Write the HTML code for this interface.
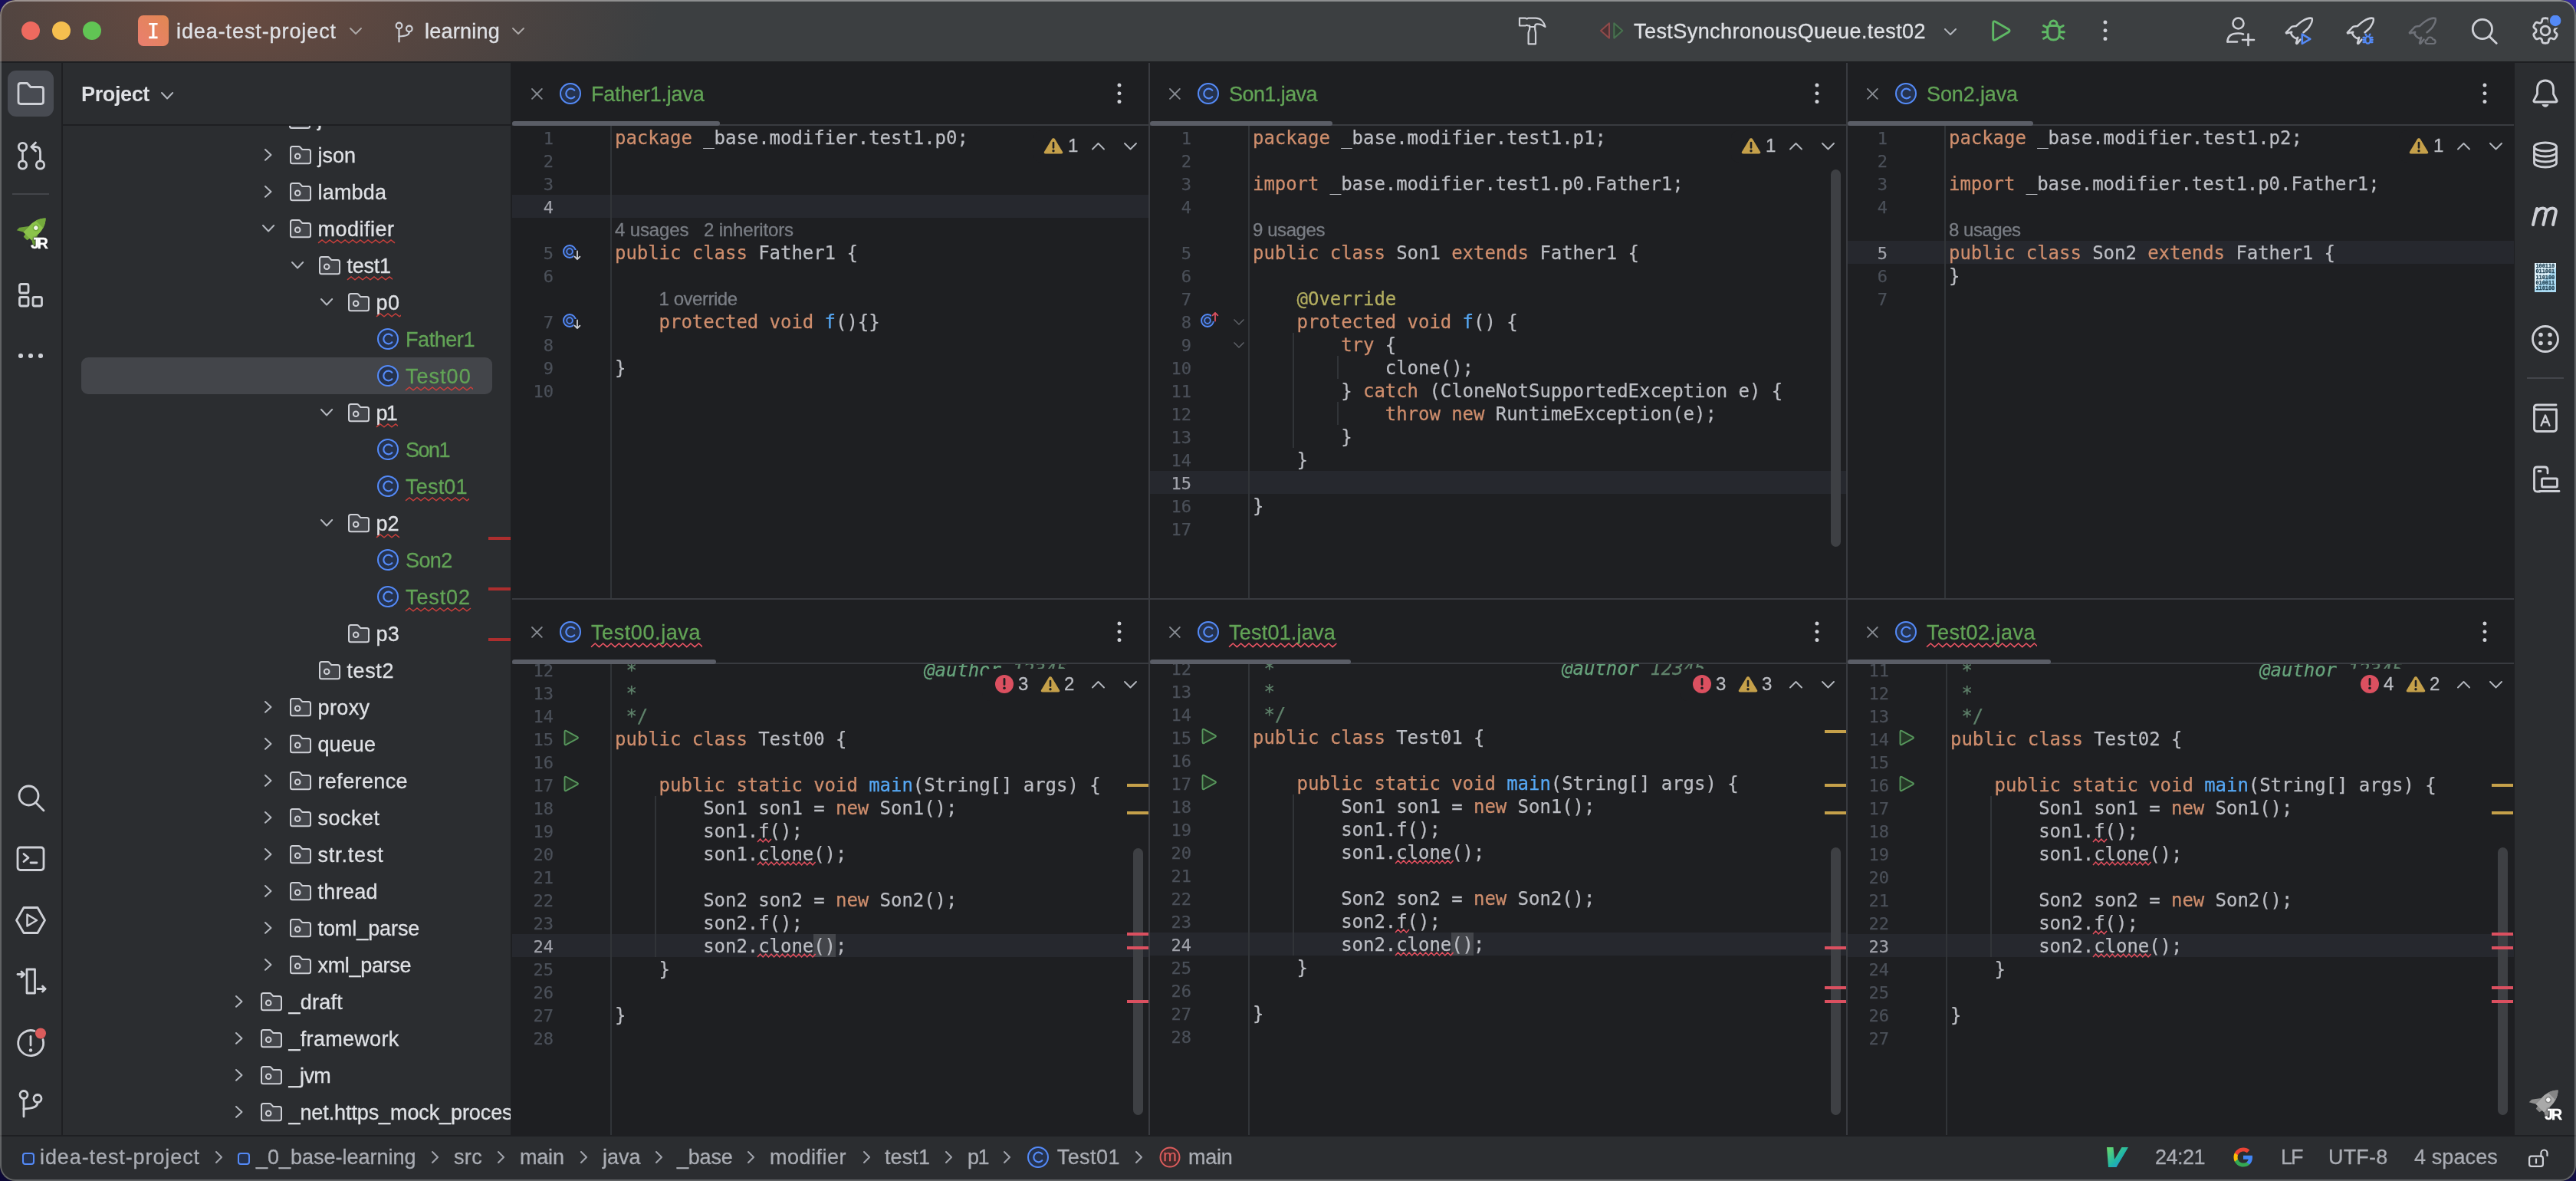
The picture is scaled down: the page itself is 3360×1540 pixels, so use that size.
<!DOCTYPE html>
<html lang="en"><head><meta charset="utf-8"><title>idea-test-project</title><style>
html,body{margin:0;padding:0;}
body{width:3360px;height:1540px;overflow:hidden;background:#000;position:relative;}
#desk{position:absolute;left:0;top:0;width:3360px;height:1540px;background:linear-gradient(180deg,rgba(0,0,0,0) 0%,rgba(8,6,40,0.75) 100%),linear-gradient(90deg,#190f5c 0%,#1b1250 40%,#3228a0 100%);}
#win{will-change:transform;position:absolute;left:0;top:0;width:3360px;height:1540px;border-radius:20px;overflow:hidden;background:#2b2d30;}
#win div,#win svg,#win span{position:absolute;}
#edge{left:0;top:0;width:3360px;height:1540px;border-radius:20px;box-shadow:inset 0 0 0 2px rgba(255,255,255,0.26),inset 0 2px 0 0 rgba(255,255,255,0.22);pointer-events:none;}
.t{white-space:pre;}
.f-sans{font-family:"Liberation Sans","DejaVu Sans",sans-serif;-webkit-text-stroke:0.3px;}
.f-mono{font-family:"DejaVu Sans Mono","Liberation Mono",monospace;-webkit-text-stroke:0.25px;}
</style></head>
<body><div id="desk"></div><div id="win">
<div style="left:0px;top:0px;width:3360px;height:80px;background:#3c3f41;background:radial-gradient(ellipse 560px 300px at 300px 0px,#6a4b40 0%,rgba(106,75,64,0.55) 45%,rgba(106,75,64,0) 100%),#3c3f41;"></div>
<div style="left:0px;top:80px;width:3360px;height:2px;background:#1e1f22;"></div>
<div style="left:80px;top:82px;width:2px;height:1398px;background:#1e1f22;"></div>
<div style="left:82px;top:162px;width:584px;height:2px;background:#1e1f22;"></div>
<div style="left:666px;top:82px;width:2614px;height:1398px;background:#1e1f22;"></div>
<div style="left:0px;top:1482px;width:3360px;height:58px;background:#2b2d30;"></div>
<div style="left:0px;top:1480px;width:3360px;height:2px;background:#1e1f22;"></div>
<div style="left:28px;top:28px;width:24px;height:24px;background:#ee6a5f;border-radius:50%;"></div>
<div style="left:68px;top:28px;width:24px;height:24px;background:#f5bf4f;border-radius:50%;"></div>
<div style="left:108px;top:28px;width:24px;height:24px;background:#61c554;border-radius:50%;"></div>
<div style="left:180px;top:20px;width:40px;height:40px;background:#e8805c;border-radius:7px;background:linear-gradient(45deg,#ea7e70 0%,#e18852 100%);"></div>
<span class="t f-mono" style="top:25px;font-size:27px;line-height:31px;color:#ffffff;left:200.00px;transform:translateX(-50%);">I</span>
<span class="t f-sans" style="top:26px;font-size:27px;line-height:30px;color:#dfe1e5;letter-spacing:0.906px;left:230.00px;">idea-test-project</span>
<svg style="left:455.3px;top:35.0px;" width="18" height="11" viewBox="0 0 18 11" fill="none"><path d="M2 2 L9.0 9 L16 2" stroke="#aeaaa9" stroke-width="1.9" stroke-linecap="round" stroke-linejoin="round"/></svg>
<svg style="left:508.7px;top:23px;" width="40" height="40" viewBox="0 0 40 40" fill="none"><g stroke="#ced0d6" stroke-width="2.2" stroke-linecap="round"><circle cx="11.5" cy="10.5" r="3.8"/><circle cx="24.8" cy="14.5" r="3.8"/><path d="M11.5 14.5 V31.5"/><path d="M24.8 18.5 C24.8 23 20 24 11.5 24.5"/></g></svg>
<span class="t f-sans" style="top:26px;font-size:27px;line-height:30px;color:#dfe1e5;letter-spacing:0.240px;left:554.00px;">learning</span>
<svg style="left:667.0px;top:35.0px;" width="18" height="11" viewBox="0 0 18 11" fill="none"><path d="M2 2 L9.0 9 L16 2" stroke="#aeaaa9" stroke-width="1.9" stroke-linecap="round" stroke-linejoin="round"/></svg>
<svg style="left:1979px;top:21.2px;" width="40" height="40" viewBox="0 0 40 40" fill="none"><g stroke="#ced0d6" stroke-width="2.200" stroke-linejoin="round" stroke-linecap="round"><path d="M3 2.700 H10.500 C11.300 2.700 11.700 3.400 12.500 3.400 C13.300 3.400 13.700 2.700 14.500 2.700 H24 C30 2.700 34.800 7 36.500 14 C33 11.300 29.500 10.300 26 10.300 C24.500 10.300 23.400 11.200 23.200 12.600 V17 L24 21.500 V36.300 H14.600 V21.500 L16.200 17 V12.500 H14.500 C13.700 12.500 13.300 11.800 12.500 11.800 C11.700 11.800 11.300 12.500 10.500 12.500 H3 Z"/><path d="M16.500 14 H23"/></g></svg>
<svg style="left:2085px;top:28px;" width="36" height="24" viewBox="0 0 36 24" fill="none"><path d="M14 2.300 L3 12 L14 21.700 Z" fill="#4b3234" stroke="#8f4a4a" stroke-width="2" stroke-linejoin="round"/><path d="M20.300 2.300 L31.300 12 L20.300 21.700 Z" fill="#324237" stroke="#48724f" stroke-width="2" stroke-linejoin="round"/></svg>
<span class="t f-sans" style="top:26px;font-size:27px;line-height:30px;color:#dfe1e5;letter-spacing:0.436px;left:2131.00px;">TestSynchronousQueue.test02</span>
<svg style="left:2535.0px;top:35.5px;" width="18" height="11" viewBox="0 0 18 11" fill="none"><path d="M2 2 L9.0 9 L16 2" stroke="#b4b8bf" stroke-width="1.9" stroke-linecap="round" stroke-linejoin="round"/></svg>
<svg style="left:2594px;top:22px;" width="36" height="36" viewBox="0 0 36 36" fill="none"><path d="M5.700 8.400 Q5.700 4.600 9 6.500 L25.600 15.900 Q28.600 18 25.600 20.100 L9 29.700 Q5.700 31.600 5.700 27.800 Z" stroke="#5fb865" stroke-width="2.900" stroke-linejoin="round"/></svg>
<svg style="left:2656px;top:20px;" width="44" height="40" viewBox="0 0 44 40" fill="none"><g stroke="#5fb865" stroke-width="3" stroke-linecap="round" stroke-linejoin="round"><path d="M14.700 18 C14.700 15 16.200 13.500 18.700 13.500 H26.100 C28.600 13.500 30.100 15 30.100 18 V24.400 C30.100 29 27 32.100 22.400 32.100 C17.800 32.100 14.700 29 14.700 24.400 Z"/><path d="M17.800 13.500 V11.500 A4.600 4.600 0 0 1 27 11.500 V13.500"/><path d="M9.600 13.500 L14 16 M8.400 21.800 H14 M9.600 30.300 L15 27.300 M35.200 13.500 L30.800 16 M36.400 21.800 H31 M35.200 30.300 L29.800 27.300"/></g></svg>
<svg style="left:2742px;top:25.3px;" width="8" height="29.4" viewBox="0 0 8 29.4" fill="none"><circle cx="4" cy="4.0" r="2.5" fill="#ced0d6"/><circle cx="4" cy="14.7" r="2.5" fill="#ced0d6"/><circle cx="4" cy="25.4" r="2.5" fill="#ced0d6"/></svg>
<svg style="left:2902px;top:18px;" width="44" height="46" viewBox="0 0 44 46" fill="none"><g stroke="#ced0d6" stroke-width="2.6" stroke-linecap="round"><circle cx="17.5" cy="12.5" r="7"/><path d="M3.5 36.5 C3.5 29 8.5 25.5 17.5 25.5 C20 25.5 22 25.8 24 26.5"/><path d="M3.5 36.5 H16"/><path d="M30.5 26.5 V41"/><path d="M23 34 H38"/></g></svg>
<svg style="left:2979px;top:20px;" width="44" height="42" viewBox="0 0 44 42" fill="none"><g stroke="#ced0d6" stroke-width="2.500" stroke-linecap="round" stroke-linejoin="round"><path d="M25.500 22.300 C29 19.500 31 18 32.700 15.500 C35.700 11 37.600 6.500 36.600 4 C34 2.800 28 5 24 7.500 C20.500 9.700 18 12 16 14 L11.500 14.500 C10.500 14.600 9.800 15.200 9 16 L3 22.300 C2.600 22.900 3 23.500 3.700 23.400 L10.200 21.700 L9.300 23.600 C10 26 12 28.500 16.200 30.300 L18.200 28.800 L16 36 C15.900 36.800 16.800 37.200 17.400 36.600 L21.500 31.500"/></g><path d="M23.800 24.600 L34.300 30.800 L23.800 37 Z" stroke="#548af7" stroke-width="2.600" stroke-linejoin="round"/></svg>
<svg style="left:3059px;top:20px;" width="44" height="42" viewBox="0 0 44 42" fill="none"><g stroke="#ced0d6" stroke-width="2.500" stroke-linecap="round" stroke-linejoin="round"><path d="M25.500 22.300 C29 19.500 31 18 32.700 15.500 C35.700 11 37.600 6.500 36.600 4 C34 2.800 28 5 24 7.500 C20.500 9.700 18 12 16 14 L11.500 14.500 C10.500 14.600 9.800 15.200 9 16 L3 22.300 C2.600 22.900 3 23.500 3.700 23.400 L10.200 21.700 L9.300 23.600 C10 26 12 28.500 16.200 30.300 L18.200 28.800 L16 36 C15.900 36.800 16.800 37.200 17.400 36.600 L21.500 31.500"/></g><g stroke="#548af7" stroke-width="2.300" stroke-linecap="round"><ellipse cx="29.500" cy="32" rx="3.300" ry="4.700"/><path d="M23.500 29 H25.500 M23.300 32 H25.300 M23.500 35 H25.500 M33.500 29 H35.500 M33.700 32 H35.700 M33.500 35 H35.500 M27.300 25.800 L26.600 24.600 M31.700 25.800 L32.400 24.600"/></g></svg>
<svg style="left:3140px;top:20px;" width="44" height="42" viewBox="0 0 44 42" fill="none"><g stroke="#6e7178" stroke-width="2.500" stroke-linecap="round" stroke-linejoin="round"><path d="M25.500 22.300 C29 19.500 31 18 32.700 15.500 C35.700 11 37.600 6.500 36.600 4 C34 2.800 28 5 24 7.500 C20.500 9.700 18 12 16 14 L11.500 14.500 C10.500 14.600 9.800 15.200 9 16 L3 22.300 C2.600 22.900 3 23.500 3.700 23.400 L10.200 21.700 L9.300 23.600 C10 26 12 28.500 16.200 30.300 L18.200 28.800 L16 36 C15.900 36.800 16.800 37.200 17.400 36.600 L21.500 31.500"/></g><path d="M26.500 37 C22.800 37 22.500 32.300 26 31.800 C26.500 27.700 32.300 27.500 33.300 31.300 C37.500 31.300 37.800 37 34 37 Z" stroke="#6e7178" stroke-width="2.200" stroke-linejoin="round"/></svg>
<svg style="left:3220px;top:20px;" width="40" height="40" viewBox="0 0 40 40" fill="none"><g stroke="#ced0d6" stroke-width="2.800" stroke-linecap="round"><circle cx="17.900" cy="18" r="12.600"/><path d="M27 27.400 L36.300 36.400"/></g></svg>
<svg style="left:3298px;top:20px;" width="44" height="40" viewBox="0 0 44 40" fill="none"><g stroke="#ced0d6" stroke-width="2.800" stroke-linejoin="round"><path d="M33.90 20.00 L33.92 19.48 L34.01 18.95 L34.25 18.39 L34.85 17.73 L35.87 16.92 L36.81 16.03 L37.20 15.21 L37.19 14.47 L37.01 13.78 L36.75 13.12 L36.44 12.48 L36.10 11.86 L35.73 11.25 L35.33 10.67 L34.89 10.11 L34.39 9.61 L33.75 9.23 L32.84 9.16 L31.60 9.52 L30.39 10.00 L29.52 10.20 L28.91 10.13 L28.41 9.94 L27.95 9.69 L27.51 9.42 L27.09 9.08 L26.73 8.58 L26.46 7.74 L26.27 6.45 L25.97 5.19 L25.45 4.44 L24.81 4.08 L24.12 3.89 L23.42 3.79 L22.71 3.73 L22.00 3.72 L21.29 3.73 L20.58 3.79 L19.88 3.89 L19.19 4.08 L18.55 4.44 L18.03 5.19 L17.73 6.45 L17.54 7.74 L17.27 8.58 L16.91 9.08 L16.49 9.42 L16.05 9.69 L15.59 9.94 L15.09 10.13 L14.48 10.20 L13.61 10.00 L12.40 9.52 L11.16 9.16 L10.25 9.23 L9.61 9.61 L9.11 10.11 L8.67 10.67 L8.27 11.25 L7.90 11.86 L7.56 12.48 L7.25 13.12 L6.99 13.78 L6.81 14.47 L6.80 15.21 L7.19 16.03 L8.13 16.92 L9.15 17.73 L9.75 18.39 L9.99 18.95 L10.08 19.48 L10.10 20.00 L10.08 20.52 L9.99 21.05 L9.75 21.61 L9.15 22.27 L8.13 23.08 L7.19 23.97 L6.80 24.79 L6.81 25.53 L6.99 26.22 L7.25 26.88 L7.56 27.52 L7.90 28.14 L8.27 28.75 L8.67 29.33 L9.11 29.89 L9.61 30.39 L10.25 30.77 L11.16 30.84 L12.40 30.48 L13.61 30.00 L14.48 29.80 L15.09 29.87 L15.59 30.06 L16.05 30.31 L16.49 30.58 L16.91 30.92 L17.27 31.42 L17.54 32.26 L17.73 33.55 L18.03 34.81 L18.55 35.56 L19.19 35.92 L19.88 36.11 L20.58 36.21 L21.29 36.27 L22.00 36.28 L22.71 36.27 L23.42 36.21 L24.12 36.11 L24.81 35.92 L25.45 35.56 L25.97 34.81 L26.27 33.55 L26.46 32.26 L26.73 31.42 L27.09 30.92 L27.51 30.58 L27.95 30.31 L28.41 30.06 L28.91 29.87 L29.52 29.80 L30.39 30.00 L31.60 30.48 L32.84 30.84 L33.75 30.77 L34.39 30.39 L34.89 29.89 L35.33 29.33 L35.73 28.75 L36.10 28.14 L36.44 27.52 L36.75 26.88 L37.01 26.22 L37.19 25.53 L37.20 24.79 L36.81 23.97 L35.87 23.08 L34.85 22.27 L34.25 21.61 L34.01 21.05 L33.92 20.52 Z"/><circle cx="22" cy="20" r="5.900"/></g><circle cx="35.100" cy="6.900" r="9.600" fill="#3c3f41"/><circle cx="35.100" cy="6.900" r="7.300" fill="#548af7"/></svg>
<div style="left:10px;top:92px;width:60px;height:60px;background:#484b52;border-radius:11px;"></div>
<svg style="left:20px;top:104px;" width="40" height="36" viewBox="0 0 40 36" fill="none"><path stroke="#ced0d6" stroke-width="2.8" stroke-linecap="round" stroke-linejoin="round" d="M4 7.5 C4 5.8 5.3 4.5 7 4.5 H15.5 L20 9.5 H33.5 C35.2 9.5 36.5 10.8 36.5 12.5 V28.5 C36.5 30.2 35.2 31.5 33.5 31.5 H7 C5.3 31.5 4 30.2 4 28.5 Z"/></svg>
<svg style="left:20px;top:182px;" width="42" height="42" viewBox="0 0 42 42" fill="none"><g stroke="#ced0d6" stroke-width="2.8" stroke-linecap="round" stroke-linejoin="round"><circle cx="9.5" cy="9.5" r="5.2"/><circle cx="9.5" cy="33" r="5.2"/><circle cx="32.5" cy="33" r="5.2"/><path d="M9.5 15 V27.5"/><path d="M32.500 27.500 V16 C32.500 11.500 30 9.500 26 9.500 H21"/><path d="M26.500 4 L21 9.500 L26.500 15"/></g></svg>
<div style="left:16px;top:252px;width:48px;height:2px;background:#43454a;"></div>
<svg style="left:18px;top:273.5px;" width="52" height="52" viewBox="0 0 52 52" fill="none"><g transform="translate(26 26) rotate(45)"><path d="M-8 1 L-15.500 11 L-15.500 16 L-8 11.500 Z" fill="#6c9f38"/><path d="M8 1 L15.500 11 L15.500 16 L8 11.500 Z" fill="#6c9f38"/><path d="M-4.500 10 H4.500 L3.200 15.500 H-3.200 Z" fill="#74aa3c"/><path d="M0 -22 C5 -17 8 -9.500 8 -2 V11.500 H-8 V-2 C-8 -9.500 -5 -17 0 -22 Z" fill="#8bc34a"/><path d="M0 -22 C3.300 -18.600 5.600 -14.500 6.900 -10.500 H-6.900 C-5.600 -14.500 -3.300 -18.600 0 -22 Z" fill="#74aa3c"/><circle cx="0" cy="-4" r="4.300" fill="#74aa3c"/><circle cx="0" cy="-4" r="2.700" fill="#f2f6ea"/></g></svg>
<span class="t f-sans" style="top:306px;font-size:20px;line-height:22px;color:#ffffff;letter-spacing:-2.539px;font-weight:bold;left:40.00px;text-shadow:0 0 2px #2b2d30,0 0 2px #2b2d30,0 0 3px #2b2d30;">JR</span>
<svg style="left:22px;top:367px;" width="38" height="36" viewBox="0 0 38 36" fill="none"><g stroke="#ced0d6" stroke-width="2.8" stroke-linecap="round" stroke-linejoin="round"><rect x="3.500" y="3.500" width="11.500" height="11.500" rx="2"/><rect x="3.500" y="20.500" width="11.500" height="11.500" rx="2"/><rect x="21" y="20.500" width="11.500" height="11.500" rx="2"/></g></svg>
<div style="left:24.2px;top:461.2px;width:5.6px;height:5.6px;background:#ced0d6;border-radius:50%;"></div>
<div style="left:37.2px;top:461.2px;width:5.6px;height:5.6px;background:#ced0d6;border-radius:50%;"></div>
<div style="left:50.2px;top:461.2px;width:5.6px;height:5.6px;background:#ced0d6;border-radius:50%;"></div>
<svg style="left:20px;top:1020px;" width="42" height="42" viewBox="0 0 42 42" fill="none"><g stroke="#ced0d6" stroke-width="2.8" stroke-linecap="round" stroke-linejoin="round"><circle cx="17.500" cy="17.500" r="12.500"/><path d="M27 27 L37 37"/></g></svg>
<svg style="left:20px;top:1102px;" width="40" height="36" viewBox="0 0 40 36" fill="none"><g stroke="#ced0d6" stroke-width="2.8" stroke-linecap="round" stroke-linejoin="round"><rect x="3" y="3" width="34" height="29.500" rx="3.500"/><path d="M11 11.500 L17 16.500 L11 21.500"/><path d="M20 23 H28" /></g></svg>
<svg style="left:18px;top:1180px;" width="44" height="40" viewBox="0 0 44 40" fill="none"><g stroke="#ced0d6" stroke-width="2.8" stroke-linecap="round" stroke-linejoin="round"><path d="M13 3.500 H31 L40.500 20 L31 36.500 H13 L3.500 20 Z"/><path d="M17.500 12.500 L30 20 L17.500 27.500 Z" stroke-width="2.500"/></g></svg>
<svg style="left:19.5px;top:1260px;" width="44" height="40" viewBox="0 0 44 40" fill="none"><g stroke="#ced0d6" stroke-width="2.8" stroke-linecap="round" stroke-linejoin="round" stroke-width="2.400"><rect x="15" y="4" width="10.500" height="31"/><path d="M3 10.500 H11"/><path d="M8 7 L11.500 10.500 L8 14"/><path d="M29 29.500 H39"/><path d="M35.500 26 L39 29.500 L35.500 33"/></g></svg>
<svg style="left:18px;top:1339px;" width="48" height="44" viewBox="0 0 48 44" fill="none"><g stroke="#ced0d6" stroke-width="2.8" stroke-linecap="round" stroke-linejoin="round"><path d="M27 5.300 A16.500 16.500 0 1 0 38 16.500"/><path d="M22 12.500 V24"/></g><circle cx="22" cy="30.500" r="2.200" fill="#ced0d6"/><circle cx="35" cy="8.500" r="7" fill="#db5c5c"/></svg>
<svg style="left:20px;top:1418px;" width="44" height="44" viewBox="0 0 44 44" fill="none"><g stroke="#ced0d6" stroke-width="2.8" stroke-linecap="round" stroke-linejoin="round"><circle cx="11" cy="9.500" r="5"/><circle cx="29" cy="14.500" r="5"/><path d="M11 15 V38"/><path d="M29 20 C29 26 22 27.500 11 28"/></g></svg>
<span class="t f-sans" style="top:108px;font-size:27px;line-height:30px;color:#dfe1e5;letter-spacing:-0.364px;font-weight:bold;left:106.00px;-webkit-text-stroke:0;">Project</span>
<svg style="left:208.9px;top:118.75px;" width="18.2" height="11.5" viewBox="0 0 18.2 11.5" fill="none"><path d="M2 2 L9.1 9.5 L16.2 2" stroke="#b4b8bf" stroke-width="2" stroke-linecap="round" stroke-linejoin="round"/></svg>
<div class="clip" style="left:82px;top:164px;width:584px;height:1316px;overflow:hidden;">
<svg style="left:294px;top:-23px;" width="30" height="28" viewBox="0 0 30 28" fill="none"><path d="M2 5.500 C2 4.100 3.100 3 4.500 3 H12.500 C13.300 3 14 3.300 14.500 3.900 L17.300 7 H25.500 C26.900 7 28 8.100 28 9.500 V23.500 C28 24.900 26.900 26 25.500 26 H4.500 C3.100 26 2 24.900 2 23.500 Z" fill="#43454a" stroke="#ced0d6" stroke-width="2"/></svg>
<span class="t f-sans" style="top:-24px;font-size:27px;line-height:30px;color:#dfe1e5;left:332.00px;">j</span>
<svg style="left:261.85px;top:29.1px;" width="11.5" height="17.8" viewBox="0 0 11.5 17.8" fill="none"><path d="M2 2 L9.5 8.9 L2 15.8" stroke="#b4b8bf" stroke-width="2" stroke-linecap="round" stroke-linejoin="round"/></svg>
<svg style="left:295px;top:23.6px;" width="30" height="28" viewBox="0 0 30 28" fill="none"><path d="M2 5.500 C2 4.100 3.100 3 4.500 3 H12.500 C13.300 3 14 3.300 14.500 3.900 L17.300 7 H25.500 C26.900 7 28 8.100 28 9.500 V22.700 C28 24.100 26.900 25.200 25.500 25.200 H4.500 C3.100 25.200 2 24.100 2 22.700 Z" fill="#43454a" stroke="#ced0d6" stroke-width="2"/><circle cx="11.200" cy="15.800" r="3.300" stroke="#ced0d6" stroke-width="2"/></svg>
<span class="t f-sans" style="top:24px;font-size:27px;line-height:30px;color:#dfe1e5;letter-spacing:-0.033px;left:332.50px;">json</span>
<svg style="left:261.85px;top:77.1px;" width="11.5" height="17.8" viewBox="0 0 11.5 17.8" fill="none"><path d="M2 2 L9.5 8.9 L2 15.8" stroke="#b4b8bf" stroke-width="2" stroke-linecap="round" stroke-linejoin="round"/></svg>
<svg style="left:295px;top:71.6px;" width="30" height="28" viewBox="0 0 30 28" fill="none"><path d="M2 5.500 C2 4.100 3.100 3 4.500 3 H12.500 C13.300 3 14 3.300 14.500 3.900 L17.300 7 H25.500 C26.900 7 28 8.100 28 9.500 V22.700 C28 24.100 26.900 25.200 25.500 25.200 H4.500 C3.100 25.200 2 24.100 2 22.700 Z" fill="#43454a" stroke="#ced0d6" stroke-width="2"/><circle cx="11.200" cy="15.800" r="3.300" stroke="#ced0d6" stroke-width="2"/></svg>
<span class="t f-sans" style="top:72px;font-size:27px;line-height:30px;color:#dfe1e5;letter-spacing:0.190px;left:332.50px;">lambda</span>
<svg style="left:258.9px;top:128.25px;" width="18.2" height="11.5" viewBox="0 0 18.2 11.5" fill="none"><path d="M2 2 L9.1 9.5 L16.2 2" stroke="#b4b8bf" stroke-width="2" stroke-linecap="round" stroke-linejoin="round"/></svg>
<svg style="left:295px;top:119.6px;" width="30" height="28" viewBox="0 0 30 28" fill="none"><path d="M2 5.500 C2 4.100 3.100 3 4.500 3 H12.500 C13.300 3 14 3.300 14.500 3.900 L17.300 7 H25.500 C26.900 7 28 8.100 28 9.500 V22.700 C28 24.100 26.900 25.200 25.500 25.200 H4.500 C3.100 25.200 2 24.100 2 22.700 Z" fill="#43454a" stroke="#ced0d6" stroke-width="2"/><circle cx="11.200" cy="15.800" r="3.300" stroke="#ced0d6" stroke-width="2"/></svg>
<span class="t f-sans" style="top:120px;font-size:27px;line-height:30px;color:#dfe1e5;letter-spacing:0.496px;left:332.50px;">modifier</span>
<svg style="left:330.5px;top:146.8px;" width="104.0" height="7.8" viewBox="0 0 104.0 7.8" fill="none"><path d="M2.0 5.8 L7.0 2.0 L12.0 5.8 L17.0 2.0 L22.0 5.8 L27.0 2.0 L32.0 5.8 L37.0 2.0 L42.0 5.8 L47.0 2.0 L52.0 5.8 L57.0 2.0 L62.0 5.8 L67.0 2.0 L72.0 5.8 L77.0 2.0 L82.0 5.8 L87.0 2.0 L92.0 5.8 L97.0 2.0 L102.0 5.8" stroke="#c7403c" stroke-width="1.5" stroke-linejoin="miter"/></svg>
<svg style="left:296.9px;top:176.25px;" width="18.2" height="11.5" viewBox="0 0 18.2 11.5" fill="none"><path d="M2 2 L9.1 9.5 L16.2 2" stroke="#b4b8bf" stroke-width="2" stroke-linecap="round" stroke-linejoin="round"/></svg>
<svg style="left:333px;top:167.6px;" width="30" height="28" viewBox="0 0 30 28" fill="none"><path d="M2 5.500 C2 4.100 3.100 3 4.500 3 H12.500 C13.300 3 14 3.300 14.500 3.900 L17.300 7 H25.500 C26.900 7 28 8.100 28 9.500 V22.700 C28 24.100 26.900 25.200 25.500 25.200 H4.500 C3.100 25.200 2 24.100 2 22.700 Z" fill="#43454a" stroke="#ced0d6" stroke-width="2"/><circle cx="11.200" cy="15.800" r="3.300" stroke="#ced0d6" stroke-width="2"/></svg>
<span class="t f-sans" style="top:168px;font-size:27px;line-height:30px;color:#dfe1e5;letter-spacing:-0.269px;left:370.50px;">test1</span>
<svg style="left:368.5px;top:194.8px;" width="61.2" height="7.8" viewBox="0 0 61.2 7.8" fill="none"><path d="M2.0 5.8 L7.0 2.0 L12.0 5.8 L17.0 2.0 L22.0 5.8 L27.0 2.0 L32.0 5.8 L37.0 2.0 L42.0 5.8 L47.0 2.0 L52.0 5.8 L57.0 2.0 L62.0 5.8" stroke="#c7403c" stroke-width="1.5" stroke-linejoin="miter"/></svg>
<svg style="left:334.9px;top:224.25px;" width="18.2" height="11.5" viewBox="0 0 18.2 11.5" fill="none"><path d="M2 2 L9.1 9.5 L16.2 2" stroke="#b4b8bf" stroke-width="2" stroke-linecap="round" stroke-linejoin="round"/></svg>
<svg style="left:371px;top:215.6px;" width="30" height="28" viewBox="0 0 30 28" fill="none"><path d="M2 5.500 C2 4.100 3.100 3 4.500 3 H12.500 C13.300 3 14 3.300 14.500 3.900 L17.300 7 H25.500 C26.900 7 28 8.100 28 9.500 V22.700 C28 24.100 26.900 25.200 25.500 25.200 H4.500 C3.100 25.200 2 24.100 2 22.700 Z" fill="#43454a" stroke="#ced0d6" stroke-width="2"/><circle cx="11.200" cy="15.800" r="3.300" stroke="#ced0d6" stroke-width="2"/></svg>
<span class="t f-sans" style="top:216px;font-size:27px;line-height:30px;color:#dfe1e5;letter-spacing:0.377px;left:408.50px;">p0</span>
<svg style="left:406.5px;top:242.8px;" width="34.8" height="7.8" viewBox="0 0 34.8 7.8" fill="none"><path d="M2.0 5.8 L7.0 2.0 L12.0 5.8 L17.0 2.0 L22.0 5.8 L27.0 2.0 L32.0 5.8 L37.0 2.0" stroke="#c7403c" stroke-width="1.5" stroke-linejoin="miter"/></svg>
<svg style="left:409px;top:263px;" width="30" height="30" viewBox="0 0 30 30" fill="none"><circle cx="15" cy="15" r="13" fill="#25324d" stroke="#548af7" stroke-width="2"/><path d="M20.3 10.8 A6.300 6.300 0 1 0 20.3 19.2" stroke="#548af7" stroke-width="2.200" stroke-linecap="round" /></svg>
<span class="t f-sans" style="top:264px;font-size:27px;line-height:30px;color:#62a356;letter-spacing:-0.438px;left:447.00px;">Father1</span>
<div style="left:24px;top:302px;width:536px;height:48px;background:#43454a;border-radius:9px;"></div>
<svg style="left:409px;top:311px;" width="30" height="30" viewBox="0 0 30 30" fill="none"><circle cx="15" cy="15" r="13" fill="#25324d" stroke="#548af7" stroke-width="2"/><path d="M20.3 10.8 A6.300 6.300 0 1 0 20.3 19.2" stroke="#548af7" stroke-width="2.200" stroke-linecap="round" /></svg>
<span class="t f-sans" style="top:312px;font-size:27px;line-height:30px;color:#62a356;letter-spacing:1.023px;left:447.00px;">Test00</span>
<svg style="left:445px;top:338.8px;" width="89.7" height="7.8" viewBox="0 0 89.7 7.8" fill="none"><path d="M2.0 5.8 L7.0 2.0 L12.0 5.8 L17.0 2.0 L22.0 5.8 L27.0 2.0 L32.0 5.8 L37.0 2.0 L42.0 5.8 L47.0 2.0 L52.0 5.8 L57.0 2.0 L62.0 5.8 L67.0 2.0 L72.0 5.8 L77.0 2.0 L82.0 5.8 L87.0 2.0 L92.0 5.8" stroke="#c7403c" stroke-width="1.5" stroke-linejoin="miter"/></svg>
<svg style="left:334.9px;top:368.25px;" width="18.2" height="11.5" viewBox="0 0 18.2 11.5" fill="none"><path d="M2 2 L9.1 9.5 L16.2 2" stroke="#b4b8bf" stroke-width="2" stroke-linecap="round" stroke-linejoin="round"/></svg>
<svg style="left:371px;top:359.6px;" width="30" height="28" viewBox="0 0 30 28" fill="none"><path d="M2 5.500 C2 4.100 3.100 3 4.500 3 H12.500 C13.300 3 14 3.300 14.500 3.900 L17.300 7 H25.500 C26.900 7 28 8.100 28 9.500 V22.700 C28 24.100 26.900 25.200 25.500 25.200 H4.500 C3.100 25.200 2 24.100 2 22.700 Z" fill="#43454a" stroke="#ced0d6" stroke-width="2"/><circle cx="11.200" cy="15.800" r="3.300" stroke="#ced0d6" stroke-width="2"/></svg>
<span class="t f-sans" style="top:360px;font-size:27px;line-height:30px;color:#dfe1e5;letter-spacing:-1.823px;left:408.50px;">p1</span>
<svg style="left:406.5px;top:386.8px;" width="30.4" height="7.8" viewBox="0 0 30.4 7.8" fill="none"><path d="M2.0 5.8 L7.0 2.0 L12.0 5.8 L17.0 2.0 L22.0 5.8 L27.0 2.0 L32.0 5.8" stroke="#c7403c" stroke-width="1.5" stroke-linejoin="miter"/></svg>
<svg style="left:409px;top:407px;" width="30" height="30" viewBox="0 0 30 30" fill="none"><circle cx="15" cy="15" r="13" fill="#25324d" stroke="#548af7" stroke-width="2"/><path d="M20.3 10.8 A6.300 6.300 0 1 0 20.3 19.2" stroke="#548af7" stroke-width="2.200" stroke-linecap="round" /></svg>
<span class="t f-sans" style="top:408px;font-size:27px;line-height:30px;color:#62a356;letter-spacing:-1.516px;left:447.00px;">Son1</span>
<svg style="left:409px;top:455px;" width="30" height="30" viewBox="0 0 30 30" fill="none"><circle cx="15" cy="15" r="13" fill="#25324d" stroke="#548af7" stroke-width="2"/><path d="M20.3 10.8 A6.300 6.300 0 1 0 20.3 19.2" stroke="#548af7" stroke-width="2.200" stroke-linecap="round" /></svg>
<span class="t f-sans" style="top:456px;font-size:27px;line-height:30px;color:#62a356;letter-spacing:0.206px;left:447.00px;">Test01</span>
<svg style="left:445px;top:482.8px;" width="84.8" height="7.8" viewBox="0 0 84.8 7.8" fill="none"><path d="M2.0 5.8 L7.0 2.0 L12.0 5.8 L17.0 2.0 L22.0 5.8 L27.0 2.0 L32.0 5.8 L37.0 2.0 L42.0 5.8 L47.0 2.0 L52.0 5.8 L57.0 2.0 L62.0 5.8 L67.0 2.0 L72.0 5.8 L77.0 2.0 L82.0 5.8 L87.0 2.0" stroke="#c7403c" stroke-width="1.5" stroke-linejoin="miter"/></svg>
<svg style="left:334.9px;top:512.25px;" width="18.2" height="11.5" viewBox="0 0 18.2 11.5" fill="none"><path d="M2 2 L9.1 9.5 L16.2 2" stroke="#b4b8bf" stroke-width="2" stroke-linecap="round" stroke-linejoin="round"/></svg>
<svg style="left:371px;top:503.6px;" width="30" height="28" viewBox="0 0 30 28" fill="none"><path d="M2 5.500 C2 4.100 3.100 3 4.500 3 H12.500 C13.300 3 14 3.300 14.500 3.900 L17.300 7 H25.500 C26.900 7 28 8.100 28 9.500 V22.700 C28 24.100 26.900 25.200 25.500 25.200 H4.500 C3.100 25.200 2 24.100 2 22.700 Z" fill="#43454a" stroke="#ced0d6" stroke-width="2"/><circle cx="11.200" cy="15.800" r="3.300" stroke="#ced0d6" stroke-width="2"/></svg>
<span class="t f-sans" style="top:504px;font-size:27px;line-height:30px;color:#dfe1e5;letter-spacing:-0.123px;left:408.50px;">p2</span>
<svg style="left:406.5px;top:530.8px;" width="33.8" height="7.8" viewBox="0 0 33.8 7.8" fill="none"><path d="M2.0 5.8 L7.0 2.0 L12.0 5.8 L17.0 2.0 L22.0 5.8 L27.0 2.0 L32.0 5.8" stroke="#c7403c" stroke-width="1.5" stroke-linejoin="miter"/></svg>
<svg style="left:409px;top:551px;" width="30" height="30" viewBox="0 0 30 30" fill="none"><circle cx="15" cy="15" r="13" fill="#25324d" stroke="#548af7" stroke-width="2"/><path d="M20.3 10.8 A6.300 6.300 0 1 0 20.3 19.2" stroke="#548af7" stroke-width="2.200" stroke-linecap="round" /></svg>
<span class="t f-sans" style="top:552px;font-size:27px;line-height:30px;color:#62a356;letter-spacing:-0.591px;left:447.00px;">Son2</span>
<svg style="left:409px;top:599px;" width="30" height="30" viewBox="0 0 30 30" fill="none"><circle cx="15" cy="15" r="13" fill="#25324d" stroke="#548af7" stroke-width="2"/><path d="M20.3 10.8 A6.300 6.300 0 1 0 20.3 19.2" stroke="#548af7" stroke-width="2.200" stroke-linecap="round" /></svg>
<span class="t f-sans" style="top:600px;font-size:27px;line-height:30px;color:#62a356;letter-spacing:0.890px;left:447.00px;">Test02</span>
<svg style="left:445px;top:626.8px;" width="88.9" height="7.8" viewBox="0 0 88.9 7.8" fill="none"><path d="M2.0 5.8 L7.0 2.0 L12.0 5.8 L17.0 2.0 L22.0 5.8 L27.0 2.0 L32.0 5.8 L37.0 2.0 L42.0 5.8 L47.0 2.0 L52.0 5.8 L57.0 2.0 L62.0 5.8 L67.0 2.0 L72.0 5.8 L77.0 2.0 L82.0 5.8 L87.0 2.0" stroke="#c7403c" stroke-width="1.5" stroke-linejoin="miter"/></svg>
<svg style="left:371px;top:647.6px;" width="30" height="28" viewBox="0 0 30 28" fill="none"><path d="M2 5.500 C2 4.100 3.100 3 4.500 3 H12.500 C13.300 3 14 3.300 14.500 3.900 L17.300 7 H25.500 C26.900 7 28 8.100 28 9.500 V22.700 C28 24.100 26.900 25.200 25.500 25.200 H4.500 C3.100 25.200 2 24.100 2 22.700 Z" fill="#43454a" stroke="#ced0d6" stroke-width="2"/><circle cx="11.200" cy="15.800" r="3.300" stroke="#ced0d6" stroke-width="2"/></svg>
<span class="t f-sans" style="top:648px;font-size:27px;line-height:30px;color:#dfe1e5;letter-spacing:0.227px;left:408.50px;">p3</span>
<svg style="left:333px;top:695.6px;" width="30" height="28" viewBox="0 0 30 28" fill="none"><path d="M2 5.500 C2 4.100 3.100 3 4.500 3 H12.500 C13.300 3 14 3.300 14.500 3.900 L17.300 7 H25.500 C26.900 7 28 8.100 28 9.500 V22.700 C28 24.100 26.900 25.200 25.500 25.200 H4.500 C3.100 25.200 2 24.100 2 22.700 Z" fill="#43454a" stroke="#ced0d6" stroke-width="2"/><circle cx="11.200" cy="15.800" r="3.300" stroke="#ced0d6" stroke-width="2"/></svg>
<span class="t f-sans" style="top:696px;font-size:27px;line-height:30px;color:#dfe1e5;letter-spacing:0.591px;left:370.50px;">test2</span>
<svg style="left:261.85px;top:749.1px;" width="11.5" height="17.8" viewBox="0 0 11.5 17.8" fill="none"><path d="M2 2 L9.5 8.9 L2 15.8" stroke="#b4b8bf" stroke-width="2" stroke-linecap="round" stroke-linejoin="round"/></svg>
<svg style="left:295px;top:743.6px;" width="30" height="28" viewBox="0 0 30 28" fill="none"><path d="M2 5.500 C2 4.100 3.100 3 4.500 3 H12.500 C13.300 3 14 3.300 14.500 3.900 L17.300 7 H25.500 C26.900 7 28 8.100 28 9.500 V22.700 C28 24.100 26.900 25.200 25.500 25.200 H4.500 C3.100 25.200 2 24.100 2 22.700 Z" fill="#43454a" stroke="#ced0d6" stroke-width="2"/><circle cx="11.200" cy="15.800" r="3.300" stroke="#ced0d6" stroke-width="2"/></svg>
<span class="t f-sans" style="top:744px;font-size:27px;line-height:30px;color:#dfe1e5;letter-spacing:0.394px;left:332.50px;">proxy</span>
<svg style="left:261.85px;top:797.1px;" width="11.5" height="17.8" viewBox="0 0 11.5 17.8" fill="none"><path d="M2 2 L9.5 8.9 L2 15.8" stroke="#b4b8bf" stroke-width="2" stroke-linecap="round" stroke-linejoin="round"/></svg>
<svg style="left:295px;top:791.6px;" width="30" height="28" viewBox="0 0 30 28" fill="none"><path d="M2 5.500 C2 4.100 3.100 3 4.500 3 H12.500 C13.300 3 14 3.300 14.500 3.900 L17.300 7 H25.500 C26.900 7 28 8.100 28 9.500 V22.700 C28 24.100 26.900 25.200 25.500 25.200 H4.500 C3.100 25.200 2 24.100 2 22.700 Z" fill="#43454a" stroke="#ced0d6" stroke-width="2"/><circle cx="11.200" cy="15.800" r="3.300" stroke="#ced0d6" stroke-width="2"/></svg>
<span class="t f-sans" style="top:792px;font-size:27px;line-height:30px;color:#dfe1e5;letter-spacing:0.101px;left:332.50px;">queue</span>
<svg style="left:261.85px;top:845.1px;" width="11.5" height="17.8" viewBox="0 0 11.5 17.8" fill="none"><path d="M2 2 L9.5 8.9 L2 15.8" stroke="#b4b8bf" stroke-width="2" stroke-linecap="round" stroke-linejoin="round"/></svg>
<svg style="left:295px;top:839.6px;" width="30" height="28" viewBox="0 0 30 28" fill="none"><path d="M2 5.500 C2 4.100 3.100 3 4.500 3 H12.500 C13.300 3 14 3.300 14.500 3.900 L17.300 7 H25.500 C26.900 7 28 8.100 28 9.500 V22.700 C28 24.100 26.900 25.200 25.500 25.200 H4.500 C3.100 25.200 2 24.100 2 22.700 Z" fill="#43454a" stroke="#ced0d6" stroke-width="2"/><circle cx="11.200" cy="15.800" r="3.300" stroke="#ced0d6" stroke-width="2"/></svg>
<span class="t f-sans" style="top:840px;font-size:27px;line-height:30px;color:#dfe1e5;letter-spacing:0.380px;left:332.50px;">reference</span>
<svg style="left:261.85px;top:893.1px;" width="11.5" height="17.8" viewBox="0 0 11.5 17.8" fill="none"><path d="M2 2 L9.5 8.9 L2 15.8" stroke="#b4b8bf" stroke-width="2" stroke-linecap="round" stroke-linejoin="round"/></svg>
<svg style="left:295px;top:887.6px;" width="30" height="28" viewBox="0 0 30 28" fill="none"><path d="M2 5.500 C2 4.100 3.100 3 4.500 3 H12.500 C13.300 3 14 3.300 14.500 3.900 L17.300 7 H25.500 C26.900 7 28 8.100 28 9.500 V22.700 C28 24.100 26.900 25.200 25.500 25.200 H4.500 C3.100 25.200 2 24.100 2 22.700 Z" fill="#43454a" stroke="#ced0d6" stroke-width="2"/><circle cx="11.200" cy="15.800" r="3.300" stroke="#ced0d6" stroke-width="2"/></svg>
<span class="t f-sans" style="top:888px;font-size:27px;line-height:30px;color:#dfe1e5;letter-spacing:0.492px;left:332.50px;">socket</span>
<svg style="left:261.85px;top:941.1px;" width="11.5" height="17.8" viewBox="0 0 11.5 17.8" fill="none"><path d="M2 2 L9.5 8.9 L2 15.8" stroke="#b4b8bf" stroke-width="2" stroke-linecap="round" stroke-linejoin="round"/></svg>
<svg style="left:295px;top:935.6px;" width="30" height="28" viewBox="0 0 30 28" fill="none"><path d="M2 5.500 C2 4.100 3.100 3 4.500 3 H12.500 C13.300 3 14 3.300 14.500 3.900 L17.300 7 H25.500 C26.900 7 28 8.100 28 9.500 V22.700 C28 24.100 26.900 25.200 25.500 25.200 H4.500 C3.100 25.200 2 24.100 2 22.700 Z" fill="#43454a" stroke="#ced0d6" stroke-width="2"/><circle cx="11.200" cy="15.800" r="3.300" stroke="#ced0d6" stroke-width="2"/></svg>
<span class="t f-sans" style="top:936px;font-size:27px;line-height:30px;color:#dfe1e5;letter-spacing:0.809px;left:332.50px;">str.test</span>
<svg style="left:261.85px;top:989.1px;" width="11.5" height="17.8" viewBox="0 0 11.5 17.8" fill="none"><path d="M2 2 L9.5 8.9 L2 15.8" stroke="#b4b8bf" stroke-width="2" stroke-linecap="round" stroke-linejoin="round"/></svg>
<svg style="left:295px;top:983.6px;" width="30" height="28" viewBox="0 0 30 28" fill="none"><path d="M2 5.500 C2 4.100 3.100 3 4.500 3 H12.500 C13.300 3 14 3.300 14.500 3.900 L17.300 7 H25.500 C26.900 7 28 8.100 28 9.500 V22.700 C28 24.100 26.900 25.200 25.500 25.200 H4.500 C3.100 25.200 2 24.100 2 22.700 Z" fill="#43454a" stroke="#ced0d6" stroke-width="2"/><circle cx="11.200" cy="15.800" r="3.300" stroke="#ced0d6" stroke-width="2"/></svg>
<span class="t f-sans" style="top:984px;font-size:27px;line-height:30px;color:#dfe1e5;letter-spacing:0.306px;left:332.50px;">thread</span>
<svg style="left:261.85px;top:1037.1px;" width="11.5" height="17.8" viewBox="0 0 11.5 17.8" fill="none"><path d="M2 2 L9.5 8.9 L2 15.8" stroke="#b4b8bf" stroke-width="2" stroke-linecap="round" stroke-linejoin="round"/></svg>
<svg style="left:295px;top:1031.6px;" width="30" height="28" viewBox="0 0 30 28" fill="none"><path d="M2 5.500 C2 4.100 3.100 3 4.500 3 H12.500 C13.300 3 14 3.300 14.500 3.900 L17.300 7 H25.500 C26.900 7 28 8.100 28 9.500 V22.700 C28 24.100 26.900 25.200 25.500 25.200 H4.500 C3.100 25.200 2 24.100 2 22.700 Z" fill="#43454a" stroke="#ced0d6" stroke-width="2"/><circle cx="11.200" cy="15.800" r="3.300" stroke="#ced0d6" stroke-width="2"/></svg>
<span class="t f-sans" style="top:1032px;font-size:27px;line-height:30px;color:#dfe1e5;letter-spacing:-0.078px;left:332.50px;">toml_parse</span>
<svg style="left:261.85px;top:1085.1px;" width="11.5" height="17.8" viewBox="0 0 11.5 17.8" fill="none"><path d="M2 2 L9.5 8.9 L2 15.8" stroke="#b4b8bf" stroke-width="2" stroke-linecap="round" stroke-linejoin="round"/></svg>
<svg style="left:295px;top:1079.6px;" width="30" height="28" viewBox="0 0 30 28" fill="none"><path d="M2 5.500 C2 4.100 3.100 3 4.500 3 H12.500 C13.300 3 14 3.300 14.500 3.900 L17.300 7 H25.500 C26.900 7 28 8.100 28 9.500 V22.700 C28 24.100 26.900 25.200 25.500 25.200 H4.500 C3.100 25.200 2 24.100 2 22.700 Z" fill="#43454a" stroke="#ced0d6" stroke-width="2"/><circle cx="11.200" cy="15.800" r="3.300" stroke="#ced0d6" stroke-width="2"/></svg>
<span class="t f-sans" style="top:1080px;font-size:27px;line-height:30px;color:#dfe1e5;letter-spacing:-0.327px;left:332.50px;">xml_parse</span>
<svg style="left:223.85000000000002px;top:1133.1px;" width="11.5" height="17.8" viewBox="0 0 11.5 17.8" fill="none"><path d="M2 2 L9.5 8.9 L2 15.8" stroke="#b4b8bf" stroke-width="2" stroke-linecap="round" stroke-linejoin="round"/></svg>
<svg style="left:257px;top:1127.6px;" width="30" height="28" viewBox="0 0 30 28" fill="none"><path d="M2 5.500 C2 4.100 3.100 3 4.500 3 H12.500 C13.300 3 14 3.300 14.500 3.900 L17.300 7 H25.500 C26.900 7 28 8.100 28 9.500 V22.700 C28 24.100 26.900 25.200 25.500 25.200 H4.500 C3.100 25.200 2 24.100 2 22.700 Z" fill="#43454a" stroke="#ced0d6" stroke-width="2"/><circle cx="11.200" cy="15.800" r="3.300" stroke="#ced0d6" stroke-width="2"/></svg>
<span class="t f-sans" style="top:1128px;font-size:27px;line-height:30px;color:#dfe1e5;letter-spacing:0.259px;left:294.50px;">_draft</span>
<svg style="left:223.85000000000002px;top:1181.1px;" width="11.5" height="17.8" viewBox="0 0 11.5 17.8" fill="none"><path d="M2 2 L9.5 8.9 L2 15.8" stroke="#b4b8bf" stroke-width="2" stroke-linecap="round" stroke-linejoin="round"/></svg>
<svg style="left:257px;top:1175.6px;" width="30" height="28" viewBox="0 0 30 28" fill="none"><path d="M2 5.500 C2 4.100 3.100 3 4.500 3 H12.500 C13.300 3 14 3.300 14.500 3.900 L17.300 7 H25.500 C26.900 7 28 8.100 28 9.500 V22.700 C28 24.100 26.900 25.200 25.500 25.200 H4.500 C3.100 25.200 2 24.100 2 22.700 Z" fill="#43454a" stroke="#ced0d6" stroke-width="2"/><circle cx="11.200" cy="15.800" r="3.300" stroke="#ced0d6" stroke-width="2"/></svg>
<span class="t f-sans" style="top:1176px;font-size:27px;line-height:30px;color:#dfe1e5;letter-spacing:0.295px;left:294.50px;">_framework</span>
<svg style="left:223.85000000000002px;top:1229.1px;" width="11.5" height="17.8" viewBox="0 0 11.5 17.8" fill="none"><path d="M2 2 L9.5 8.9 L2 15.8" stroke="#b4b8bf" stroke-width="2" stroke-linecap="round" stroke-linejoin="round"/></svg>
<svg style="left:257px;top:1223.6px;" width="30" height="28" viewBox="0 0 30 28" fill="none"><path d="M2 5.500 C2 4.100 3.100 3 4.500 3 H12.500 C13.300 3 14 3.300 14.500 3.900 L17.300 7 H25.500 C26.900 7 28 8.100 28 9.500 V22.700 C28 24.100 26.900 25.200 25.500 25.200 H4.500 C3.100 25.200 2 24.100 2 22.700 Z" fill="#43454a" stroke="#ced0d6" stroke-width="2"/><circle cx="11.200" cy="15.800" r="3.300" stroke="#ced0d6" stroke-width="2"/></svg>
<span class="t f-sans" style="top:1224px;font-size:27px;line-height:30px;color:#dfe1e5;letter-spacing:-0.554px;left:294.50px;">_jvm</span>
<svg style="left:223.85000000000002px;top:1277.1px;" width="11.5" height="17.8" viewBox="0 0 11.5 17.8" fill="none"><path d="M2 2 L9.5 8.9 L2 15.8" stroke="#b4b8bf" stroke-width="2" stroke-linecap="round" stroke-linejoin="round"/></svg>
<svg style="left:257px;top:1271.6px;" width="30" height="28" viewBox="0 0 30 28" fill="none"><path d="M2 5.500 C2 4.100 3.100 3 4.500 3 H12.500 C13.300 3 14 3.300 14.500 3.900 L17.300 7 H25.500 C26.900 7 28 8.100 28 9.500 V22.700 C28 24.100 26.900 25.200 25.500 25.200 H4.500 C3.100 25.200 2 24.100 2 22.700 Z" fill="#43454a" stroke="#ced0d6" stroke-width="2"/><circle cx="11.200" cy="15.800" r="3.300" stroke="#ced0d6" stroke-width="2"/></svg>
<span class="t f-sans" style="top:1272px;font-size:27px;line-height:30px;color:#dfe1e5;letter-spacing:-0.099px;left:294.50px;">_net.https_mock_proces</span>
</div>
<div style="left:637px;top:700px;width:29px;height:4px;background:#ad2e2e;"></div>
<div style="left:637px;top:766px;width:29px;height:4px;background:#ad2e2e;"></div>
<div style="left:637px;top:832px;width:29px;height:4px;background:#ad2e2e;"></div>
<div style="left:1498px;top:82px;width:2px;height:1398px;background:#393b40;"></div>
<div style="left:2408px;top:82px;width:2px;height:1398px;background:#393b40;"></div>
<div style="left:668px;top:780px;width:2611px;height:2px;background:#393b40;"></div>
<svg style="left:691.6px;top:113.6px;" width="16.8" height="16.8" viewBox="0 0 16.8 16.8" fill="none"><path d="M2 2 L14.8 14.8 M14.8 2 L2 14.8" stroke="#868a91" stroke-width="1.8" stroke-linecap="round"/></svg>
<svg style="left:729px;top:107px;" width="30" height="30" viewBox="0 0 30 30" fill="none"><circle cx="15" cy="15" r="13" fill="#25324d" stroke="#548af7" stroke-width="2"/><path d="M20.3 10.8 A6.300 6.300 0 1 0 20.3 19.2" stroke="#548af7" stroke-width="2.200" stroke-linecap="round" /></svg>
<span class="t f-sans" style="top:108px;font-size:27px;line-height:30px;color:#62a356;letter-spacing:-0.216px;left:771.00px;">Father1.java</span>
<svg style="left:1456px;top:107.3px;" width="8" height="29.4" viewBox="0 0 8 29.4" fill="none"><circle cx="4" cy="4.0" r="2.5" fill="#ced0d6"/><circle cx="4" cy="14.7" r="2.5" fill="#ced0d6"/><circle cx="4" cy="25.4" r="2.5" fill="#ced0d6"/></svg>
<div style="left:668px;top:162px;width:830px;height:2px;background:#393b40;"></div>
<div style="left:668px;top:158px;width:270.5px;height:6px;background:#5a5d66;border-radius:3px;"></div>
<div class="clip" style="left:668px;top:164px;width:830px;height:616px;overflow:hidden;">
<div style="left:0px;top:90px;width:830px;height:30px;background:#26282e;"></div>
<div style="left:128px;top:0px;width:2px;height:616px;background:#313438;"></div>
<span class="t f-mono" style="top:4px;font-size:22px;line-height:25px;color:#4b5059;letter-spacing:-0.045px;left:53.95px;transform:translateX(-100%);">1</span>
<span class="t f-mono" style="top:2px;font-size:24px;line-height:28px;color:#cf8e6d;letter-spacing:-0.049px;left:134.00px;">package</span>
<span class="t f-mono" style="top:2px;font-size:24px;line-height:28px;color:#bcbec4;letter-spacing:-0.049px;left:249.20px;">_base.modifier.test1.p0;</span>
<span class="t f-mono" style="top:34px;font-size:22px;line-height:25px;color:#4b5059;letter-spacing:-0.045px;left:53.95px;transform:translateX(-100%);">2</span>
<span class="t f-mono" style="top:64px;font-size:22px;line-height:25px;color:#4b5059;letter-spacing:-0.045px;left:53.95px;transform:translateX(-100%);">3</span>
<span class="t f-mono" style="top:94px;font-size:22px;line-height:25px;color:#a1a3ab;letter-spacing:-0.045px;left:53.95px;transform:translateX(-100%);">4</span>
<span class="t f-sans" style="top:122px;font-size:24px;line-height:27px;color:#7a7e85;letter-spacing:-0.137px;left:134.00px;">4 usages   2 inheritors</span>
<span class="t f-mono" style="top:154px;font-size:22px;line-height:25px;color:#4b5059;letter-spacing:-0.045px;left:53.95px;transform:translateX(-100%);">5</span>
<span class="t f-mono" style="top:152px;font-size:24px;line-height:28px;color:#cf8e6d;letter-spacing:-0.049px;left:134.00px;">public class</span>
<span class="t f-mono" style="top:152px;font-size:24px;line-height:28px;color:#bcbec4;letter-spacing:-0.049px;left:321.20px;">Father1 {</span>
<span class="t f-mono" style="top:184px;font-size:22px;line-height:25px;color:#4b5059;letter-spacing:-0.045px;left:53.95px;transform:translateX(-100%);">6</span>
<span class="t f-sans" style="top:212px;font-size:24px;line-height:27px;color:#7a7e85;letter-spacing:-0.473px;left:191.60px;">1 override</span>
<span class="t f-mono" style="top:244px;font-size:22px;line-height:25px;color:#4b5059;letter-spacing:-0.045px;left:53.95px;transform:translateX(-100%);">7</span>
<span class="t f-mono" style="top:242px;font-size:24px;line-height:28px;color:#cf8e6d;letter-spacing:-0.049px;left:191.60px;">protected void</span>
<span class="t f-mono" style="top:242px;font-size:24px;line-height:28px;color:#56a8f5;letter-spacing:-0.049px;left:407.60px;">f</span>
<span class="t f-mono" style="top:242px;font-size:24px;line-height:28px;color:#bcbec4;letter-spacing:-0.049px;left:422.00px;">(){}</span>
<span class="t f-mono" style="top:274px;font-size:22px;line-height:25px;color:#4b5059;letter-spacing:-0.045px;left:53.95px;transform:translateX(-100%);">8</span>
<span class="t f-mono" style="top:304px;font-size:22px;line-height:25px;color:#4b5059;letter-spacing:-0.045px;left:53.95px;transform:translateX(-100%);">9</span>
<span class="t f-mono" style="top:302px;font-size:24px;line-height:28px;color:#bcbec4;letter-spacing:-0.049px;left:134.00px;">}</span>
<span class="t f-mono" style="top:334px;font-size:22px;line-height:25px;color:#4b5059;letter-spacing:-0.045px;left:53.95px;transform:translateX(-100%);">10</span>
<svg style="left:64px;top:150.7px;" width="28" height="28" viewBox="0 0 28 28" fill="none"><circle cx="11" cy="13" r="8" fill="#25324d" stroke="#548af7" stroke-width="1.900"/><circle cx="11" cy="13" r="3.800" fill="#1f2a44" stroke="#548af7" stroke-width="1.800"/><rect x="16.500" y="11" width="10" height="14" fill="#1e1f22"/><path d="M21 12.500 V23 M17.600 19.700 L21 23.200 L24.400 19.700" stroke="#ced0d6" stroke-width="1.800" stroke-linecap="round" stroke-linejoin="round"/></svg>
<svg style="left:64px;top:240.7px;" width="28" height="28" viewBox="0 0 28 28" fill="none"><circle cx="11" cy="13" r="8" fill="#25324d" stroke="#548af7" stroke-width="1.900"/><circle cx="11" cy="13" r="3.800" fill="#1f2a44" stroke="#548af7" stroke-width="1.800"/><rect x="16.500" y="11" width="10" height="14" fill="#1e1f22"/><path d="M21 12.500 V23 M17.600 19.700 L21 23.200 L24.400 19.700" stroke="#ced0d6" stroke-width="1.800" stroke-linecap="round" stroke-linejoin="round"/></svg>
<div style="left:680px;top:6px;width:128px;height:42px;background:#1e1f22;border-radius:10px 0 0 10px;"></div>
<svg style="left:692px;top:14px;" width="28" height="24" viewBox="0 0 28 24" fill="none"><path d="M14 2.200 C14.900 2.200 15.700 2.700 16.100 3.500 L26 20 C26.900 21.600 25.800 22.500 24.200 22.500 H3.800 C2.200 22.500 1.100 21.600 2 20 L11.900 3.500 C12.300 2.700 13.100 2.200 14 2.200 Z" fill="#c5a04a"/><path d="M14 8 V14.500" stroke="#1e1f22" stroke-width="2.600" stroke-linecap="round"/><circle cx="14" cy="18.700" r="1.700" fill="#1e1f22"/></svg>
<span class="t f-sans" style="top:12px;font-size:24px;line-height:27px;color:#bcbec4;left:725.00px;">1</span>
<svg style="left:754.5px;top:20.75px;" width="19" height="11.5" viewBox="0 0 19 11.5" fill="none"><path d="M2 9.5 L9.5 2 L17 9.5" stroke="#b4b8bf" stroke-width="1.9" stroke-linecap="round" stroke-linejoin="round"/></svg>
<svg style="left:796.5px;top:20.75px;" width="19" height="11.5" viewBox="0 0 19 11.5" fill="none"><path d="M2 2 L9.5 9.5 L17 2" stroke="#b4b8bf" stroke-width="1.9" stroke-linecap="round" stroke-linejoin="round"/></svg>
</div>
<svg style="left:1523.6px;top:113.6px;" width="16.8" height="16.8" viewBox="0 0 16.8 16.8" fill="none"><path d="M2 2 L14.8 14.8 M14.8 2 L2 14.8" stroke="#868a91" stroke-width="1.8" stroke-linecap="round"/></svg>
<svg style="left:1561px;top:107px;" width="30" height="30" viewBox="0 0 30 30" fill="none"><circle cx="15" cy="15" r="13" fill="#25324d" stroke="#548af7" stroke-width="2"/><path d="M20.3 10.8 A6.300 6.300 0 1 0 20.3 19.2" stroke="#548af7" stroke-width="2.200" stroke-linecap="round" /></svg>
<span class="t f-sans" style="top:108px;font-size:27px;line-height:30px;color:#62a356;letter-spacing:-0.566px;left:1603.00px;">Son1.java</span>
<svg style="left:2366px;top:107.3px;" width="8" height="29.4" viewBox="0 0 8 29.4" fill="none"><circle cx="4" cy="4.0" r="2.5" fill="#ced0d6"/><circle cx="4" cy="14.7" r="2.5" fill="#ced0d6"/><circle cx="4" cy="25.4" r="2.5" fill="#ced0d6"/></svg>
<div style="left:1500px;top:162px;width:908px;height:2px;background:#393b40;"></div>
<div style="left:1500px;top:158px;width:238px;height:6px;background:#5a5d66;border-radius:3px;"></div>
<div class="clip" style="left:1500px;top:164px;width:908px;height:616px;overflow:hidden;">
<div style="left:0px;top:450px;width:908px;height:30px;background:#26282e;"></div>
<div style="left:128px;top:0px;width:2px;height:616px;background:#313438;"></div>
<div style="left:186.4px;top:270px;width:2px;height:150px;background:#313438;"></div>
<div style="left:244.0px;top:300px;width:2px;height:30px;background:#313438;"></div>
<div style="left:244.0px;top:360px;width:2px;height:30px;background:#313438;"></div>
<span class="t f-mono" style="top:4px;font-size:22px;line-height:25px;color:#4b5059;letter-spacing:-0.045px;left:53.95px;transform:translateX(-100%);">1</span>
<span class="t f-mono" style="top:2px;font-size:24px;line-height:28px;color:#cf8e6d;letter-spacing:-0.049px;left:134.00px;">package</span>
<span class="t f-mono" style="top:2px;font-size:24px;line-height:28px;color:#bcbec4;letter-spacing:-0.049px;left:249.20px;">_base.modifier.test1.p1;</span>
<span class="t f-mono" style="top:34px;font-size:22px;line-height:25px;color:#4b5059;letter-spacing:-0.045px;left:53.95px;transform:translateX(-100%);">2</span>
<span class="t f-mono" style="top:64px;font-size:22px;line-height:25px;color:#4b5059;letter-spacing:-0.045px;left:53.95px;transform:translateX(-100%);">3</span>
<span class="t f-mono" style="top:62px;font-size:24px;line-height:28px;color:#cf8e6d;letter-spacing:-0.049px;left:134.00px;">import</span>
<span class="t f-mono" style="top:62px;font-size:24px;line-height:28px;color:#bcbec4;letter-spacing:-0.049px;left:234.80px;">_base.modifier.test1.p0.Father1;</span>
<span class="t f-mono" style="top:94px;font-size:22px;line-height:25px;color:#4b5059;letter-spacing:-0.045px;left:53.95px;transform:translateX(-100%);">4</span>
<span class="t f-sans" style="top:122px;font-size:24px;line-height:27px;color:#7a7e85;letter-spacing:-0.426px;left:134.00px;">9 usages</span>
<span class="t f-mono" style="top:154px;font-size:22px;line-height:25px;color:#4b5059;letter-spacing:-0.045px;left:53.95px;transform:translateX(-100%);">5</span>
<span class="t f-mono" style="top:152px;font-size:24px;line-height:28px;color:#cf8e6d;letter-spacing:-0.049px;left:134.00px;">public class</span>
<span class="t f-mono" style="top:152px;font-size:24px;line-height:28px;color:#bcbec4;letter-spacing:-0.049px;left:321.20px;">Son1 </span>
<span class="t f-mono" style="top:152px;font-size:24px;line-height:28px;color:#cf8e6d;letter-spacing:-0.049px;left:393.20px;">extends</span>
<span class="t f-mono" style="top:152px;font-size:24px;line-height:28px;color:#bcbec4;letter-spacing:-0.049px;left:508.40px;">Father1 {</span>
<span class="t f-mono" style="top:184px;font-size:22px;line-height:25px;color:#4b5059;letter-spacing:-0.045px;left:53.95px;transform:translateX(-100%);">6</span>
<span class="t f-mono" style="top:214px;font-size:22px;line-height:25px;color:#4b5059;letter-spacing:-0.045px;left:53.95px;transform:translateX(-100%);">7</span>
<span class="t f-mono" style="top:212px;font-size:24px;line-height:28px;color:#b3ae60;letter-spacing:-0.049px;left:191.60px;">@Override</span>
<span class="t f-mono" style="top:244px;font-size:22px;line-height:25px;color:#4b5059;letter-spacing:-0.045px;left:53.95px;transform:translateX(-100%);">8</span>
<span class="t f-mono" style="top:242px;font-size:24px;line-height:28px;color:#cf8e6d;letter-spacing:-0.049px;left:191.60px;">protected void</span>
<span class="t f-mono" style="top:242px;font-size:24px;line-height:28px;color:#56a8f5;letter-spacing:-0.049px;left:407.60px;">f</span>
<span class="t f-mono" style="top:242px;font-size:24px;line-height:28px;color:#bcbec4;letter-spacing:-0.049px;left:422.00px;">() {</span>
<span class="t f-mono" style="top:274px;font-size:22px;line-height:25px;color:#4b5059;letter-spacing:-0.045px;left:53.95px;transform:translateX(-100%);">9</span>
<span class="t f-mono" style="top:272px;font-size:24px;line-height:28px;color:#cf8e6d;letter-spacing:-0.049px;left:249.20px;">try</span>
<span class="t f-mono" style="top:272px;font-size:24px;line-height:28px;color:#bcbec4;letter-spacing:-0.049px;left:306.80px;">{</span>
<span class="t f-mono" style="top:304px;font-size:22px;line-height:25px;color:#4b5059;letter-spacing:-0.045px;left:53.95px;transform:translateX(-100%);">10</span>
<span class="t f-mono" style="top:302px;font-size:24px;line-height:28px;color:#bcbec4;letter-spacing:-0.049px;left:306.80px;">clone();</span>
<span class="t f-mono" style="top:334px;font-size:22px;line-height:25px;color:#4b5059;letter-spacing:-0.045px;left:53.95px;transform:translateX(-100%);">11</span>
<span class="t f-mono" style="top:332px;font-size:24px;line-height:28px;color:#bcbec4;letter-spacing:-0.049px;left:249.20px;">} </span>
<span class="t f-mono" style="top:332px;font-size:24px;line-height:28px;color:#cf8e6d;letter-spacing:-0.049px;left:278.00px;">catch</span>
<span class="t f-mono" style="top:332px;font-size:24px;line-height:28px;color:#bcbec4;letter-spacing:-0.049px;left:364.40px;">(CloneNotSupportedException e) {</span>
<span class="t f-mono" style="top:364px;font-size:22px;line-height:25px;color:#4b5059;letter-spacing:-0.045px;left:53.95px;transform:translateX(-100%);">12</span>
<span class="t f-mono" style="top:362px;font-size:24px;line-height:28px;color:#cf8e6d;letter-spacing:-0.049px;left:306.80px;">throw new</span>
<span class="t f-mono" style="top:362px;font-size:24px;line-height:28px;color:#bcbec4;letter-spacing:-0.049px;left:450.80px;">RuntimeException(e);</span>
<span class="t f-mono" style="top:394px;font-size:22px;line-height:25px;color:#4b5059;letter-spacing:-0.045px;left:53.95px;transform:translateX(-100%);">13</span>
<span class="t f-mono" style="top:392px;font-size:24px;line-height:28px;color:#bcbec4;letter-spacing:-0.049px;left:249.20px;">}</span>
<span class="t f-mono" style="top:424px;font-size:22px;line-height:25px;color:#4b5059;letter-spacing:-0.045px;left:53.95px;transform:translateX(-100%);">14</span>
<span class="t f-mono" style="top:422px;font-size:24px;line-height:28px;color:#bcbec4;letter-spacing:-0.049px;left:191.60px;">}</span>
<span class="t f-mono" style="top:454px;font-size:22px;line-height:25px;color:#a1a3ab;letter-spacing:-0.045px;left:53.95px;transform:translateX(-100%);">15</span>
<span class="t f-mono" style="top:484px;font-size:22px;line-height:25px;color:#4b5059;letter-spacing:-0.045px;left:53.95px;transform:translateX(-100%);">16</span>
<span class="t f-mono" style="top:482px;font-size:24px;line-height:28px;color:#bcbec4;letter-spacing:-0.049px;left:134.00px;">}</span>
<span class="t f-mono" style="top:514px;font-size:22px;line-height:25px;color:#4b5059;letter-spacing:-0.045px;left:53.95px;transform:translateX(-100%);">17</span>
<svg style="left:64px;top:240.7px;" width="28" height="28" viewBox="0 0 28 28" fill="none"><circle cx="11" cy="13" r="8" fill="#25324d" stroke="#548af7" stroke-width="1.900"/><circle cx="11" cy="13" r="3.800" fill="#1f2a44" stroke="#548af7" stroke-width="1.800"/><rect x="16" y="0" width="10" height="14" fill="#1e1f22"/><path d="M21 13.500 V3 M17.600 6.300 L21 2.800 L24.400 6.300" stroke="#db5060" stroke-width="1.800" stroke-linecap="round" stroke-linejoin="round"/></svg>
<svg style="left:107.5px;top:250.5px;" width="16" height="10" viewBox="0 0 16 10" fill="none"><path d="M2 2 L8.0 8 L14 2" stroke="#5a5d63" stroke-width="1.7" stroke-linecap="round" stroke-linejoin="round"/></svg>
<svg style="left:107.5px;top:280.5px;" width="16" height="10" viewBox="0 0 16 10" fill="none"><path d="M2 2 L8.0 8 L14 2" stroke="#5a5d63" stroke-width="1.7" stroke-linecap="round" stroke-linejoin="round"/></svg>
<div style="left:888px;top:57px;width:13px;height:492px;background:#3e4044;border-radius:6.5px;"></div>
<div style="left:758px;top:6px;width:128px;height:42px;background:#1e1f22;border-radius:10px 0 0 10px;"></div>
<svg style="left:770px;top:14px;" width="28" height="24" viewBox="0 0 28 24" fill="none"><path d="M14 2.200 C14.900 2.200 15.700 2.700 16.100 3.500 L26 20 C26.900 21.600 25.800 22.500 24.200 22.500 H3.800 C2.200 22.500 1.100 21.600 2 20 L11.900 3.500 C12.300 2.700 13.100 2.200 14 2.200 Z" fill="#c5a04a"/><path d="M14 8 V14.500" stroke="#1e1f22" stroke-width="2.600" stroke-linecap="round"/><circle cx="14" cy="18.700" r="1.700" fill="#1e1f22"/></svg>
<span class="t f-sans" style="top:12px;font-size:24px;line-height:27px;color:#bcbec4;left:803.00px;">1</span>
<svg style="left:832.5px;top:20.75px;" width="19" height="11.5" viewBox="0 0 19 11.5" fill="none"><path d="M2 9.5 L9.5 2 L17 9.5" stroke="#b4b8bf" stroke-width="1.9" stroke-linecap="round" stroke-linejoin="round"/></svg>
<svg style="left:874.5px;top:20.75px;" width="19" height="11.5" viewBox="0 0 19 11.5" fill="none"><path d="M2 2 L9.5 9.5 L17 2" stroke="#b4b8bf" stroke-width="1.9" stroke-linecap="round" stroke-linejoin="round"/></svg>
</div>
<svg style="left:2433.6px;top:113.6px;" width="16.8" height="16.8" viewBox="0 0 16.8 16.8" fill="none"><path d="M2 2 L14.8 14.8 M14.8 2 L2 14.8" stroke="#868a91" stroke-width="1.8" stroke-linecap="round"/></svg>
<svg style="left:2471px;top:107px;" width="30" height="30" viewBox="0 0 30 30" fill="none"><circle cx="15" cy="15" r="13" fill="#25324d" stroke="#548af7" stroke-width="2"/><path d="M20.3 10.8 A6.300 6.300 0 1 0 20.3 19.2" stroke="#548af7" stroke-width="2.200" stroke-linecap="round" /></svg>
<span class="t f-sans" style="top:108px;font-size:27px;line-height:30px;color:#62a356;letter-spacing:-0.122px;left:2513.00px;">Son2.java</span>
<svg style="left:3237px;top:107.3px;" width="8" height="29.4" viewBox="0 0 8 29.4" fill="none"><circle cx="4" cy="4.0" r="2.5" fill="#ced0d6"/><circle cx="4" cy="14.7" r="2.5" fill="#ced0d6"/><circle cx="4" cy="25.4" r="2.5" fill="#ced0d6"/></svg>
<div style="left:2410px;top:162px;width:869px;height:2px;background:#393b40;"></div>
<div style="left:2410px;top:158px;width:242px;height:6px;background:#5a5d66;border-radius:3px;"></div>
<div class="clip" style="left:2410px;top:164px;width:869px;height:616px;overflow:hidden;">
<div style="left:0px;top:150px;width:869px;height:30px;background:#26282e;"></div>
<div style="left:126px;top:0px;width:2px;height:616px;background:#313438;"></div>
<span class="t f-mono" style="top:4px;font-size:22px;line-height:25px;color:#4b5059;letter-spacing:-0.045px;left:51.95px;transform:translateX(-100%);">1</span>
<span class="t f-mono" style="top:2px;font-size:24px;line-height:28px;color:#cf8e6d;letter-spacing:-0.049px;left:132.00px;">package</span>
<span class="t f-mono" style="top:2px;font-size:24px;line-height:28px;color:#bcbec4;letter-spacing:-0.049px;left:247.20px;">_base.modifier.test1.p2;</span>
<span class="t f-mono" style="top:34px;font-size:22px;line-height:25px;color:#4b5059;letter-spacing:-0.045px;left:51.95px;transform:translateX(-100%);">2</span>
<span class="t f-mono" style="top:64px;font-size:22px;line-height:25px;color:#4b5059;letter-spacing:-0.045px;left:51.95px;transform:translateX(-100%);">3</span>
<span class="t f-mono" style="top:62px;font-size:24px;line-height:28px;color:#cf8e6d;letter-spacing:-0.049px;left:132.00px;">import</span>
<span class="t f-mono" style="top:62px;font-size:24px;line-height:28px;color:#bcbec4;letter-spacing:-0.049px;left:232.80px;">_base.modifier.test1.p0.Father1;</span>
<span class="t f-mono" style="top:94px;font-size:22px;line-height:25px;color:#4b5059;letter-spacing:-0.045px;left:51.95px;transform:translateX(-100%);">4</span>
<span class="t f-sans" style="top:122px;font-size:24px;line-height:27px;color:#7a7e85;letter-spacing:-0.488px;left:132.00px;">8 usages</span>
<span class="t f-mono" style="top:154px;font-size:22px;line-height:25px;color:#a1a3ab;letter-spacing:-0.045px;left:51.95px;transform:translateX(-100%);">5</span>
<span class="t f-mono" style="top:152px;font-size:24px;line-height:28px;color:#cf8e6d;letter-spacing:-0.049px;left:132.00px;">public class</span>
<span class="t f-mono" style="top:152px;font-size:24px;line-height:28px;color:#bcbec4;letter-spacing:-0.049px;left:319.20px;">Son2 </span>
<span class="t f-mono" style="top:152px;font-size:24px;line-height:28px;color:#cf8e6d;letter-spacing:-0.049px;left:391.20px;">extends</span>
<span class="t f-mono" style="top:152px;font-size:24px;line-height:28px;color:#bcbec4;letter-spacing:-0.049px;left:506.40px;">Father1 {</span>
<span class="t f-mono" style="top:184px;font-size:22px;line-height:25px;color:#4b5059;letter-spacing:-0.045px;left:51.95px;transform:translateX(-100%);">6</span>
<span class="t f-mono" style="top:182px;font-size:24px;line-height:28px;color:#bcbec4;letter-spacing:-0.049px;left:132.00px;">}</span>
<span class="t f-mono" style="top:214px;font-size:22px;line-height:25px;color:#4b5059;letter-spacing:-0.045px;left:51.95px;transform:translateX(-100%);">7</span>
<div style="left:719px;top:6px;width:128px;height:42px;background:#1e1f22;border-radius:10px 0 0 10px;"></div>
<svg style="left:731px;top:14px;" width="28" height="24" viewBox="0 0 28 24" fill="none"><path d="M14 2.200 C14.900 2.200 15.700 2.700 16.100 3.500 L26 20 C26.900 21.600 25.800 22.500 24.200 22.500 H3.800 C2.200 22.500 1.100 21.600 2 20 L11.900 3.500 C12.300 2.700 13.100 2.200 14 2.200 Z" fill="#c5a04a"/><path d="M14 8 V14.500" stroke="#1e1f22" stroke-width="2.600" stroke-linecap="round"/><circle cx="14" cy="18.700" r="1.700" fill="#1e1f22"/></svg>
<span class="t f-sans" style="top:12px;font-size:24px;line-height:27px;color:#bcbec4;left:764.00px;">1</span>
<svg style="left:793.5px;top:20.75px;" width="19" height="11.5" viewBox="0 0 19 11.5" fill="none"><path d="M2 9.5 L9.5 2 L17 9.5" stroke="#b4b8bf" stroke-width="1.9" stroke-linecap="round" stroke-linejoin="round"/></svg>
<svg style="left:835.5px;top:20.75px;" width="19" height="11.5" viewBox="0 0 19 11.5" fill="none"><path d="M2 2 L9.5 9.5 L17 2" stroke="#b4b8bf" stroke-width="1.9" stroke-linecap="round" stroke-linejoin="round"/></svg>
</div>
<svg style="left:691.6px;top:815.6px;" width="16.8" height="16.8" viewBox="0 0 16.8 16.8" fill="none"><path d="M2 2 L14.8 14.8 M14.8 2 L2 14.8" stroke="#868a91" stroke-width="1.8" stroke-linecap="round"/></svg>
<svg style="left:729px;top:809px;" width="30" height="30" viewBox="0 0 30 30" fill="none"><circle cx="15" cy="15" r="13" fill="#25324d" stroke="#548af7" stroke-width="2"/><path d="M20.3 10.8 A6.300 6.300 0 1 0 20.3 19.2" stroke="#548af7" stroke-width="2.200" stroke-linecap="round" /></svg>
<span class="t f-sans" style="top:810px;font-size:27px;line-height:30px;color:#62a356;letter-spacing:0.582px;left:771.00px;">Test00.java</span>
<svg style="left:769px;top:837.2px;" width="147" height="8.6" viewBox="0 0 147 8.6" fill="none"><path d="M2.0 6.6 L7.2 2.0 L12.4 6.6 L17.6 2.0 L22.8 6.6 L28.0 2.0 L33.2 6.6 L38.4 2.0 L43.6 6.6 L48.8 2.0 L54.0 6.6 L59.2 2.0 L64.4 6.6 L69.6 2.0 L74.8 6.6 L80.0 2.0 L85.2 6.6 L90.4 2.0 L95.6 6.6 L100.8 2.0 L106.0 6.6 L111.2 2.0 L116.4 6.6 L121.6 2.0 L126.8 6.6 L132.0 2.0 L137.2 6.6 L142.4 2.0 L147.6 6.6" stroke="#eb5564" stroke-width="1.6" stroke-linejoin="miter"/></svg>
<svg style="left:1456px;top:809.3px;" width="8" height="29.4" viewBox="0 0 8 29.4" fill="none"><circle cx="4" cy="4.0" r="2.5" fill="#ced0d6"/><circle cx="4" cy="14.7" r="2.5" fill="#ced0d6"/><circle cx="4" cy="25.4" r="2.5" fill="#ced0d6"/></svg>
<div style="left:668px;top:864px;width:830px;height:2px;background:#393b40;"></div>
<div style="left:668px;top:860px;width:266px;height:6px;background:#5a5d66;border-radius:3px;"></div>
<div class="clip" style="left:668px;top:866px;width:830px;height:614px;overflow:hidden;">
<div style="left:0px;top:352px;width:830px;height:30px;background:#26282e;"></div>
<div style="left:128px;top:0px;width:2px;height:614px;background:#313438;"></div>
<div style="left:186.4px;top:172px;width:2px;height:210px;background:#313438;"></div>
<div style="left:393.2px;top:352px;width:28.8px;height:30px;background:#43454a;"></div>
<span class="t f-mono" style="top:-4px;font-size:22px;line-height:25px;color:#4b5059;letter-spacing:-0.045px;left:53.95px;transform:translateX(-100%);">12</span>
<span class="t f-mono" style="top:-6px;font-size:24px;line-height:28px;color:#5f826b;letter-spacing:-0.049px;left:148.40px;">*</span>
<span class="t f-mono" style="top:-6px;font-size:24px;line-height:28px;color:#67a37c;letter-spacing:-0.049px;font-style:italic;left:537.20px;">@author</span>
<span class="t f-mono" style="top:-6px;font-size:24px;line-height:28px;color:#5f826b;letter-spacing:-0.049px;font-style:italic;left:652.40px;">12345</span>
<span class="t f-mono" style="top:26px;font-size:22px;line-height:25px;color:#4b5059;letter-spacing:-0.045px;left:53.95px;transform:translateX(-100%);">13</span>
<span class="t f-mono" style="top:24px;font-size:24px;line-height:28px;color:#5f826b;letter-spacing:-0.049px;left:148.40px;">*</span>
<span class="t f-mono" style="top:56px;font-size:22px;line-height:25px;color:#4b5059;letter-spacing:-0.045px;left:53.95px;transform:translateX(-100%);">14</span>
<span class="t f-mono" style="top:54px;font-size:24px;line-height:28px;color:#5f826b;letter-spacing:-0.049px;left:148.40px;">*/</span>
<span class="t f-mono" style="top:86px;font-size:22px;line-height:25px;color:#4b5059;letter-spacing:-0.045px;left:53.95px;transform:translateX(-100%);">15</span>
<span class="t f-mono" style="top:84px;font-size:24px;line-height:28px;color:#cf8e6d;letter-spacing:-0.049px;left:134.00px;">public class</span>
<span class="t f-mono" style="top:84px;font-size:24px;line-height:28px;color:#bcbec4;letter-spacing:-0.049px;left:321.20px;">Test00 {</span>
<span class="t f-mono" style="top:116px;font-size:22px;line-height:25px;color:#4b5059;letter-spacing:-0.045px;left:53.95px;transform:translateX(-100%);">16</span>
<span class="t f-mono" style="top:146px;font-size:22px;line-height:25px;color:#4b5059;letter-spacing:-0.045px;left:53.95px;transform:translateX(-100%);">17</span>
<span class="t f-mono" style="top:144px;font-size:24px;line-height:28px;color:#cf8e6d;letter-spacing:-0.049px;left:191.60px;">public static void</span>
<span class="t f-mono" style="top:144px;font-size:24px;line-height:28px;color:#56a8f5;letter-spacing:-0.049px;left:465.20px;">main</span>
<span class="t f-mono" style="top:144px;font-size:24px;line-height:28px;color:#bcbec4;letter-spacing:-0.049px;left:522.80px;">(String[] args) {</span>
<span class="t f-mono" style="top:176px;font-size:22px;line-height:25px;color:#4b5059;letter-spacing:-0.045px;left:53.95px;transform:translateX(-100%);">18</span>
<span class="t f-mono" style="top:174px;font-size:24px;line-height:28px;color:#bcbec4;letter-spacing:-0.049px;left:249.20px;">Son1 son1 = </span>
<span class="t f-mono" style="top:174px;font-size:24px;line-height:28px;color:#cf8e6d;letter-spacing:-0.049px;left:422.00px;">new</span>
<span class="t f-mono" style="top:174px;font-size:24px;line-height:28px;color:#bcbec4;letter-spacing:-0.049px;left:479.60px;">Son1();</span>
<span class="t f-mono" style="top:206px;font-size:22px;line-height:25px;color:#4b5059;letter-spacing:-0.045px;left:53.95px;transform:translateX(-100%);">19</span>
<span class="t f-mono" style="top:204px;font-size:24px;line-height:28px;color:#bcbec4;letter-spacing:-0.049px;left:249.20px;">son1.f();</span>
<span class="t f-mono" style="top:236px;font-size:22px;line-height:25px;color:#4b5059;letter-spacing:-0.045px;left:53.95px;transform:translateX(-100%);">20</span>
<span class="t f-mono" style="top:234px;font-size:24px;line-height:28px;color:#bcbec4;letter-spacing:-0.049px;left:249.20px;">son1.clone();</span>
<span class="t f-mono" style="top:266px;font-size:22px;line-height:25px;color:#4b5059;letter-spacing:-0.045px;left:53.95px;transform:translateX(-100%);">21</span>
<span class="t f-mono" style="top:296px;font-size:22px;line-height:25px;color:#4b5059;letter-spacing:-0.045px;left:53.95px;transform:translateX(-100%);">22</span>
<span class="t f-mono" style="top:294px;font-size:24px;line-height:28px;color:#bcbec4;letter-spacing:-0.049px;left:249.20px;">Son2 son2 = </span>
<span class="t f-mono" style="top:294px;font-size:24px;line-height:28px;color:#cf8e6d;letter-spacing:-0.049px;left:422.00px;">new</span>
<span class="t f-mono" style="top:294px;font-size:24px;line-height:28px;color:#bcbec4;letter-spacing:-0.049px;left:479.60px;">Son2();</span>
<span class="t f-mono" style="top:326px;font-size:22px;line-height:25px;color:#4b5059;letter-spacing:-0.045px;left:53.95px;transform:translateX(-100%);">23</span>
<span class="t f-mono" style="top:324px;font-size:24px;line-height:28px;color:#bcbec4;letter-spacing:-0.049px;left:249.20px;">son2.f();</span>
<span class="t f-mono" style="top:356px;font-size:22px;line-height:25px;color:#a1a3ab;letter-spacing:-0.045px;left:53.95px;transform:translateX(-100%);">24</span>
<span class="t f-mono" style="top:354px;font-size:24px;line-height:28px;color:#bcbec4;letter-spacing:-0.049px;left:249.20px;">son2.clone();</span>
<span class="t f-mono" style="top:386px;font-size:22px;line-height:25px;color:#4b5059;letter-spacing:-0.045px;left:53.95px;transform:translateX(-100%);">25</span>
<span class="t f-mono" style="top:384px;font-size:24px;line-height:28px;color:#bcbec4;letter-spacing:-0.049px;left:191.60px;">}</span>
<span class="t f-mono" style="top:416px;font-size:22px;line-height:25px;color:#4b5059;letter-spacing:-0.045px;left:53.95px;transform:translateX(-100%);">26</span>
<span class="t f-mono" style="top:446px;font-size:22px;line-height:25px;color:#4b5059;letter-spacing:-0.045px;left:53.95px;transform:translateX(-100%);">27</span>
<span class="t f-mono" style="top:444px;font-size:24px;line-height:28px;color:#bcbec4;letter-spacing:-0.049px;left:134.00px;">}</span>
<span class="t f-mono" style="top:476px;font-size:22px;line-height:25px;color:#4b5059;letter-spacing:-0.045px;left:53.95px;transform:translateX(-100%);">28</span>
<svg style="left:318.2px;top:225.5px;" width="20.4" height="8" viewBox="0 0 20.4 8" fill="none"><path d="M2.0 6.0 L5.6 2.0 L9.2 6.0 L12.8 2.0 L16.4 6.0 L20.0 2.0" stroke="#e5505f" stroke-width="1.5" stroke-linejoin="miter"/></svg>
<svg style="left:318.2px;top:255.5px;" width="78.0" height="8" viewBox="0 0 78.0 8" fill="none"><path d="M2.0 6.0 L5.6 2.0 L9.2 6.0 L12.8 2.0 L16.4 6.0 L20.0 2.0 L23.6 6.0 L27.2 2.0 L30.8 6.0 L34.4 2.0 L38.0 6.0 L41.6 2.0 L45.2 6.0 L48.8 2.0 L52.4 6.0 L56.0 2.0 L59.6 6.0 L63.2 2.0 L66.8 6.0 L70.4 2.0 L74.0 6.0 L77.6 2.0" stroke="#e5505f" stroke-width="1.5" stroke-linejoin="miter"/></svg>
<svg style="left:318.2px;top:375.5px;" width="78.0" height="8" viewBox="0 0 78.0 8" fill="none"><path d="M2.0 6.0 L5.6 2.0 L9.2 6.0 L12.8 2.0 L16.4 6.0 L20.0 2.0 L23.6 6.0 L27.2 2.0 L30.8 6.0 L34.4 2.0 L38.0 6.0 L41.6 2.0 L45.2 6.0 L48.8 2.0 L52.4 6.0 L56.0 2.0 L59.6 6.0 L63.2 2.0 L66.8 6.0 L70.4 2.0 L74.0 6.0 L77.6 2.0" stroke="#e5505f" stroke-width="1.5" stroke-linejoin="miter"/></svg>
<svg style="left:64.5px;top:82.7px;" width="26" height="26" viewBox="0 0 26 26" fill="none"><path d="M3.500 5.500 Q3.500 3 5.700 4.200 L20 11.900 Q22 13 20 14.100 L5.700 21.800 Q3.500 23 3.500 20.500 Z" fill="#253627" stroke="#57965c" stroke-width="1.900" stroke-linejoin="round"/></svg>
<svg style="left:64.5px;top:142.7px;" width="26" height="26" viewBox="0 0 26 26" fill="none"><path d="M3.500 5.500 Q3.500 3 5.700 4.200 L20 11.900 Q22 13 20 14.100 L5.700 21.800 Q3.500 23 3.500 20.500 Z" fill="#253627" stroke="#57965c" stroke-width="1.900" stroke-linejoin="round"/></svg>
<div style="left:810px;top:240px;width:13px;height:348px;background:#3e4044;border-radius:6.5px;"></div>
<div style="left:802px;top:156px;width:28px;height:4px;background:#c5a04a;"></div>
<div style="left:802px;top:192px;width:28px;height:4px;background:#c5a04a;"></div>
<div style="left:802px;top:350px;width:28px;height:4px;background:#db5060;"></div>
<div style="left:802px;top:368px;width:28px;height:4px;background:#db5060;"></div>
<div style="left:802px;top:438px;width:28px;height:4px;background:#db5060;"></div>
<div style="left:613px;top:6px;width:195px;height:42px;background:#1e1f22;border-radius:10px 0 0 10px;"></div>
<svg style="left:629px;top:13px;" width="26" height="26" viewBox="0 0 26 26" fill="none"><circle cx="13" cy="13" r="12" fill="#db5060"/><path d="M13 6.500 V13.500" stroke="#1e1f22" stroke-width="2.800" stroke-linecap="round"/><circle cx="13" cy="18.300" r="1.800" fill="#1e1f22"/></svg>
<span class="t f-sans" style="top:12px;font-size:24px;line-height:27px;color:#bcbec4;left:660.00px;">3</span>
<svg style="left:688px;top:14px;" width="28" height="24" viewBox="0 0 28 24" fill="none"><path d="M14 2.200 C14.900 2.200 15.700 2.700 16.100 3.500 L26 20 C26.900 21.600 25.800 22.500 24.200 22.500 H3.800 C2.200 22.500 1.100 21.600 2 20 L11.900 3.500 C12.300 2.700 13.100 2.200 14 2.200 Z" fill="#c5a04a"/><path d="M14 8 V14.500" stroke="#1e1f22" stroke-width="2.600" stroke-linecap="round"/><circle cx="14" cy="18.700" r="1.700" fill="#1e1f22"/></svg>
<span class="t f-sans" style="top:12px;font-size:24px;line-height:27px;color:#bcbec4;left:720.00px;">2</span>
<svg style="left:754.5px;top:20.75px;" width="19" height="11.5" viewBox="0 0 19 11.5" fill="none"><path d="M2 9.5 L9.5 2 L17 9.5" stroke="#b4b8bf" stroke-width="1.9" stroke-linecap="round" stroke-linejoin="round"/></svg>
<svg style="left:796.5px;top:20.75px;" width="19" height="11.5" viewBox="0 0 19 11.5" fill="none"><path d="M2 2 L9.5 9.5 L17 2" stroke="#b4b8bf" stroke-width="1.9" stroke-linecap="round" stroke-linejoin="round"/></svg>
</div>
<svg style="left:1523.6px;top:815.6px;" width="16.8" height="16.8" viewBox="0 0 16.8 16.8" fill="none"><path d="M2 2 L14.8 14.8 M14.8 2 L2 14.8" stroke="#868a91" stroke-width="1.8" stroke-linecap="round"/></svg>
<svg style="left:1561px;top:809px;" width="30" height="30" viewBox="0 0 30 30" fill="none"><circle cx="15" cy="15" r="13" fill="#25324d" stroke="#548af7" stroke-width="2"/><path d="M20.3 10.8 A6.300 6.300 0 1 0 20.3 19.2" stroke="#548af7" stroke-width="2.200" stroke-linecap="round" /></svg>
<span class="t f-sans" style="top:810px;font-size:27px;line-height:30px;color:#62a356;letter-spacing:0.219px;left:1603.00px;">Test01.java</span>
<svg style="left:1601px;top:837.2px;" width="143" height="8.6" viewBox="0 0 143 8.6" fill="none"><path d="M2.0 6.6 L7.2 2.0 L12.4 6.6 L17.6 2.0 L22.8 6.6 L28.0 2.0 L33.2 6.6 L38.4 2.0 L43.6 6.6 L48.8 2.0 L54.0 6.6 L59.2 2.0 L64.4 6.6 L69.6 2.0 L74.8 6.6 L80.0 2.0 L85.2 6.6 L90.4 2.0 L95.6 6.6 L100.8 2.0 L106.0 6.6 L111.2 2.0 L116.4 6.6 L121.6 2.0 L126.8 6.6 L132.0 2.0 L137.2 6.6 L142.4 2.0" stroke="#eb5564" stroke-width="1.6" stroke-linejoin="miter"/></svg>
<svg style="left:2366px;top:809.3px;" width="8" height="29.4" viewBox="0 0 8 29.4" fill="none"><circle cx="4" cy="4.0" r="2.5" fill="#ced0d6"/><circle cx="4" cy="14.7" r="2.5" fill="#ced0d6"/><circle cx="4" cy="25.4" r="2.5" fill="#ced0d6"/></svg>
<div style="left:1500px;top:864px;width:908px;height:2px;background:#393b40;"></div>
<div style="left:1500px;top:860px;width:262px;height:6px;background:#5a5d66;border-radius:3px;"></div>
<div class="clip" style="left:1500px;top:866px;width:908px;height:614px;overflow:hidden;">
<div style="left:0px;top:350px;width:908px;height:30px;background:#26282e;"></div>
<div style="left:128px;top:0px;width:2px;height:614px;background:#313438;"></div>
<div style="left:186.4px;top:170px;width:2px;height:210px;background:#313438;"></div>
<div style="left:393.2px;top:350px;width:28.8px;height:30px;background:#43454a;"></div>
<span class="t f-mono" style="top:-6px;font-size:22px;line-height:25px;color:#4b5059;letter-spacing:-0.045px;left:53.95px;transform:translateX(-100%);">12</span>
<span class="t f-mono" style="top:-8px;font-size:24px;line-height:28px;color:#5f826b;letter-spacing:-0.049px;left:148.40px;">*</span>
<span class="t f-mono" style="top:-8px;font-size:24px;line-height:28px;color:#67a37c;letter-spacing:-0.049px;font-style:italic;left:537.20px;">@author</span>
<span class="t f-mono" style="top:-8px;font-size:24px;line-height:28px;color:#5f826b;letter-spacing:-0.049px;font-style:italic;left:652.40px;">12345</span>
<span class="t f-mono" style="top:24px;font-size:22px;line-height:25px;color:#4b5059;letter-spacing:-0.045px;left:53.95px;transform:translateX(-100%);">13</span>
<span class="t f-mono" style="top:22px;font-size:24px;line-height:28px;color:#5f826b;letter-spacing:-0.049px;left:148.40px;">*</span>
<span class="t f-mono" style="top:54px;font-size:22px;line-height:25px;color:#4b5059;letter-spacing:-0.045px;left:53.95px;transform:translateX(-100%);">14</span>
<span class="t f-mono" style="top:52px;font-size:24px;line-height:28px;color:#5f826b;letter-spacing:-0.049px;left:148.40px;">*/</span>
<span class="t f-mono" style="top:84px;font-size:22px;line-height:25px;color:#4b5059;letter-spacing:-0.045px;left:53.95px;transform:translateX(-100%);">15</span>
<span class="t f-mono" style="top:82px;font-size:24px;line-height:28px;color:#cf8e6d;letter-spacing:-0.049px;left:134.00px;">public class</span>
<span class="t f-mono" style="top:82px;font-size:24px;line-height:28px;color:#bcbec4;letter-spacing:-0.049px;left:321.20px;">Test01 {</span>
<span class="t f-mono" style="top:114px;font-size:22px;line-height:25px;color:#4b5059;letter-spacing:-0.045px;left:53.95px;transform:translateX(-100%);">16</span>
<span class="t f-mono" style="top:144px;font-size:22px;line-height:25px;color:#4b5059;letter-spacing:-0.045px;left:53.95px;transform:translateX(-100%);">17</span>
<span class="t f-mono" style="top:142px;font-size:24px;line-height:28px;color:#cf8e6d;letter-spacing:-0.049px;left:191.60px;">public static void</span>
<span class="t f-mono" style="top:142px;font-size:24px;line-height:28px;color:#56a8f5;letter-spacing:-0.049px;left:465.20px;">main</span>
<span class="t f-mono" style="top:142px;font-size:24px;line-height:28px;color:#bcbec4;letter-spacing:-0.049px;left:522.80px;">(String[] args) {</span>
<span class="t f-mono" style="top:174px;font-size:22px;line-height:25px;color:#4b5059;letter-spacing:-0.045px;left:53.95px;transform:translateX(-100%);">18</span>
<span class="t f-mono" style="top:172px;font-size:24px;line-height:28px;color:#bcbec4;letter-spacing:-0.049px;left:249.20px;">Son1 son1 = </span>
<span class="t f-mono" style="top:172px;font-size:24px;line-height:28px;color:#cf8e6d;letter-spacing:-0.049px;left:422.00px;">new</span>
<span class="t f-mono" style="top:172px;font-size:24px;line-height:28px;color:#bcbec4;letter-spacing:-0.049px;left:479.60px;">Son1();</span>
<span class="t f-mono" style="top:204px;font-size:22px;line-height:25px;color:#4b5059;letter-spacing:-0.045px;left:53.95px;transform:translateX(-100%);">19</span>
<span class="t f-mono" style="top:202px;font-size:24px;line-height:28px;color:#bcbec4;letter-spacing:-0.049px;left:249.20px;">son1.f();</span>
<span class="t f-mono" style="top:234px;font-size:22px;line-height:25px;color:#4b5059;letter-spacing:-0.045px;left:53.95px;transform:translateX(-100%);">20</span>
<span class="t f-mono" style="top:232px;font-size:24px;line-height:28px;color:#bcbec4;letter-spacing:-0.049px;left:249.20px;">son1.clone();</span>
<span class="t f-mono" style="top:264px;font-size:22px;line-height:25px;color:#4b5059;letter-spacing:-0.045px;left:53.95px;transform:translateX(-100%);">21</span>
<span class="t f-mono" style="top:294px;font-size:22px;line-height:25px;color:#4b5059;letter-spacing:-0.045px;left:53.95px;transform:translateX(-100%);">22</span>
<span class="t f-mono" style="top:292px;font-size:24px;line-height:28px;color:#bcbec4;letter-spacing:-0.049px;left:249.20px;">Son2 son2 = </span>
<span class="t f-mono" style="top:292px;font-size:24px;line-height:28px;color:#cf8e6d;letter-spacing:-0.049px;left:422.00px;">new</span>
<span class="t f-mono" style="top:292px;font-size:24px;line-height:28px;color:#bcbec4;letter-spacing:-0.049px;left:479.60px;">Son2();</span>
<span class="t f-mono" style="top:324px;font-size:22px;line-height:25px;color:#4b5059;letter-spacing:-0.045px;left:53.95px;transform:translateX(-100%);">23</span>
<span class="t f-mono" style="top:322px;font-size:24px;line-height:28px;color:#bcbec4;letter-spacing:-0.049px;left:249.20px;">son2.f();</span>
<span class="t f-mono" style="top:354px;font-size:22px;line-height:25px;color:#a1a3ab;letter-spacing:-0.045px;left:53.95px;transform:translateX(-100%);">24</span>
<span class="t f-mono" style="top:352px;font-size:24px;line-height:28px;color:#bcbec4;letter-spacing:-0.049px;left:249.20px;">son2.clone();</span>
<span class="t f-mono" style="top:384px;font-size:22px;line-height:25px;color:#4b5059;letter-spacing:-0.045px;left:53.95px;transform:translateX(-100%);">25</span>
<span class="t f-mono" style="top:382px;font-size:24px;line-height:28px;color:#bcbec4;letter-spacing:-0.049px;left:191.60px;">}</span>
<span class="t f-mono" style="top:414px;font-size:22px;line-height:25px;color:#4b5059;letter-spacing:-0.045px;left:53.95px;transform:translateX(-100%);">26</span>
<span class="t f-mono" style="top:444px;font-size:22px;line-height:25px;color:#4b5059;letter-spacing:-0.045px;left:53.95px;transform:translateX(-100%);">27</span>
<span class="t f-mono" style="top:442px;font-size:24px;line-height:28px;color:#bcbec4;letter-spacing:-0.049px;left:134.00px;">}</span>
<span class="t f-mono" style="top:474px;font-size:22px;line-height:25px;color:#4b5059;letter-spacing:-0.045px;left:53.95px;transform:translateX(-100%);">28</span>
<svg style="left:318.2px;top:253.5px;" width="78.0" height="8" viewBox="0 0 78.0 8" fill="none"><path d="M2.0 6.0 L5.6 2.0 L9.2 6.0 L12.8 2.0 L16.4 6.0 L20.0 2.0 L23.6 6.0 L27.2 2.0 L30.8 6.0 L34.4 2.0 L38.0 6.0 L41.6 2.0 L45.2 6.0 L48.8 2.0 L52.4 6.0 L56.0 2.0 L59.6 6.0 L63.2 2.0 L66.8 6.0 L70.4 2.0 L74.0 6.0 L77.6 2.0" stroke="#e5505f" stroke-width="1.5" stroke-linejoin="miter"/></svg>
<svg style="left:318.2px;top:343.5px;" width="20.4" height="8" viewBox="0 0 20.4 8" fill="none"><path d="M2.0 6.0 L5.6 2.0 L9.2 6.0 L12.8 2.0 L16.4 6.0 L20.0 2.0" stroke="#e5505f" stroke-width="1.5" stroke-linejoin="miter"/></svg>
<svg style="left:318.2px;top:373.5px;" width="78.0" height="8" viewBox="0 0 78.0 8" fill="none"><path d="M2.0 6.0 L5.6 2.0 L9.2 6.0 L12.8 2.0 L16.4 6.0 L20.0 2.0 L23.6 6.0 L27.2 2.0 L30.8 6.0 L34.4 2.0 L38.0 6.0 L41.6 2.0 L45.2 6.0 L48.8 2.0 L52.4 6.0 L56.0 2.0 L59.6 6.0 L63.2 2.0 L66.8 6.0 L70.4 2.0 L74.0 6.0 L77.6 2.0" stroke="#e5505f" stroke-width="1.5" stroke-linejoin="miter"/></svg>
<svg style="left:64.5px;top:80.7px;" width="26" height="26" viewBox="0 0 26 26" fill="none"><path d="M3.500 5.500 Q3.500 3 5.700 4.200 L20 11.900 Q22 13 20 14.100 L5.700 21.800 Q3.500 23 3.500 20.500 Z" fill="#253627" stroke="#57965c" stroke-width="1.900" stroke-linejoin="round"/></svg>
<svg style="left:64.5px;top:140.7px;" width="26" height="26" viewBox="0 0 26 26" fill="none"><path d="M3.500 5.500 Q3.500 3 5.700 4.200 L20 11.900 Q22 13 20 14.100 L5.700 21.800 Q3.500 23 3.500 20.500 Z" fill="#253627" stroke="#57965c" stroke-width="1.900" stroke-linejoin="round"/></svg>
<div style="left:888px;top:239px;width:13px;height:349px;background:#3e4044;border-radius:6.5px;"></div>
<div style="left:880px;top:86px;width:28px;height:4px;background:#c5a04a;"></div>
<div style="left:880px;top:156px;width:28px;height:4px;background:#c5a04a;"></div>
<div style="left:880px;top:192px;width:28px;height:4px;background:#c5a04a;"></div>
<div style="left:880px;top:368px;width:28px;height:4px;background:#db5060;"></div>
<div style="left:880px;top:420px;width:28px;height:4px;background:#db5060;"></div>
<div style="left:880px;top:437.5px;width:28px;height:4px;background:#db5060;"></div>
<div style="left:691px;top:6px;width:195px;height:42px;background:#1e1f22;border-radius:10px 0 0 10px;"></div>
<svg style="left:707px;top:13px;" width="26" height="26" viewBox="0 0 26 26" fill="none"><circle cx="13" cy="13" r="12" fill="#db5060"/><path d="M13 6.500 V13.500" stroke="#1e1f22" stroke-width="2.800" stroke-linecap="round"/><circle cx="13" cy="18.300" r="1.800" fill="#1e1f22"/></svg>
<span class="t f-sans" style="top:12px;font-size:24px;line-height:27px;color:#bcbec4;left:738.00px;">3</span>
<svg style="left:766px;top:14px;" width="28" height="24" viewBox="0 0 28 24" fill="none"><path d="M14 2.200 C14.900 2.200 15.700 2.700 16.100 3.500 L26 20 C26.900 21.600 25.800 22.500 24.200 22.500 H3.800 C2.200 22.500 1.100 21.600 2 20 L11.900 3.500 C12.300 2.700 13.100 2.200 14 2.200 Z" fill="#c5a04a"/><path d="M14 8 V14.500" stroke="#1e1f22" stroke-width="2.600" stroke-linecap="round"/><circle cx="14" cy="18.700" r="1.700" fill="#1e1f22"/></svg>
<span class="t f-sans" style="top:12px;font-size:24px;line-height:27px;color:#bcbec4;left:798.00px;">3</span>
<svg style="left:832.5px;top:20.75px;" width="19" height="11.5" viewBox="0 0 19 11.5" fill="none"><path d="M2 9.5 L9.5 2 L17 9.5" stroke="#b4b8bf" stroke-width="1.9" stroke-linecap="round" stroke-linejoin="round"/></svg>
<svg style="left:874.5px;top:20.75px;" width="19" height="11.5" viewBox="0 0 19 11.5" fill="none"><path d="M2 2 L9.5 9.5 L17 2" stroke="#b4b8bf" stroke-width="1.9" stroke-linecap="round" stroke-linejoin="round"/></svg>
</div>
<svg style="left:2433.6px;top:815.6px;" width="16.8" height="16.8" viewBox="0 0 16.8 16.8" fill="none"><path d="M2 2 L14.8 14.8 M14.8 2 L2 14.8" stroke="#868a91" stroke-width="1.8" stroke-linecap="round"/></svg>
<svg style="left:2471px;top:809px;" width="30" height="30" viewBox="0 0 30 30" fill="none"><circle cx="15" cy="15" r="13" fill="#25324d" stroke="#548af7" stroke-width="2"/><path d="M20.3 10.8 A6.300 6.300 0 1 0 20.3 19.2" stroke="#548af7" stroke-width="2.200" stroke-linecap="round" /></svg>
<span class="t f-sans" style="top:810px;font-size:27px;line-height:30px;color:#62a356;letter-spacing:0.491px;left:2513.00px;">Test02.java</span>
<svg style="left:2511px;top:837.2px;" width="146" height="8.6" viewBox="0 0 146 8.6" fill="none"><path d="M2.0 6.6 L7.2 2.0 L12.4 6.6 L17.6 2.0 L22.8 6.6 L28.0 2.0 L33.2 6.6 L38.4 2.0 L43.6 6.6 L48.8 2.0 L54.0 6.6 L59.2 2.0 L64.4 6.6 L69.6 2.0 L74.8 6.6 L80.0 2.0 L85.2 6.6 L90.4 2.0 L95.6 6.6 L100.8 2.0 L106.0 6.6 L111.2 2.0 L116.4 6.6 L121.6 2.0 L126.8 6.6 L132.0 2.0 L137.2 6.6 L142.4 2.0 L147.6 6.6" stroke="#eb5564" stroke-width="1.6" stroke-linejoin="miter"/></svg>
<svg style="left:3237px;top:809.3px;" width="8" height="29.4" viewBox="0 0 8 29.4" fill="none"><circle cx="4" cy="4.0" r="2.5" fill="#ced0d6"/><circle cx="4" cy="14.7" r="2.5" fill="#ced0d6"/><circle cx="4" cy="25.4" r="2.5" fill="#ced0d6"/></svg>
<div style="left:2410px;top:864px;width:869px;height:2px;background:#393b40;"></div>
<div style="left:2410px;top:860px;width:265px;height:6px;background:#5a5d66;border-radius:3px;"></div>
<div class="clip" style="left:2410px;top:866px;width:869px;height:614px;overflow:hidden;">
<div style="left:0px;top:352px;width:869px;height:30px;background:#26282e;"></div>
<div style="left:128px;top:0px;width:2px;height:614px;background:#313438;"></div>
<div style="left:186.4px;top:172px;width:2px;height:210px;background:#313438;"></div>
<span class="t f-mono" style="top:-4px;font-size:22px;line-height:25px;color:#4b5059;letter-spacing:-0.045px;left:53.95px;transform:translateX(-100%);">11</span>
<span class="t f-mono" style="top:-6px;font-size:24px;line-height:28px;color:#5f826b;letter-spacing:-0.049px;left:148.40px;">*</span>
<span class="t f-mono" style="top:-6px;font-size:24px;line-height:28px;color:#67a37c;letter-spacing:-0.049px;font-style:italic;left:537.20px;">@author</span>
<span class="t f-mono" style="top:-6px;font-size:24px;line-height:28px;color:#5f826b;letter-spacing:-0.049px;font-style:italic;left:652.40px;">12345</span>
<span class="t f-mono" style="top:26px;font-size:22px;line-height:25px;color:#4b5059;letter-spacing:-0.045px;left:53.95px;transform:translateX(-100%);">12</span>
<span class="t f-mono" style="top:24px;font-size:24px;line-height:28px;color:#5f826b;letter-spacing:-0.049px;left:148.40px;">*</span>
<span class="t f-mono" style="top:56px;font-size:22px;line-height:25px;color:#4b5059;letter-spacing:-0.045px;left:53.95px;transform:translateX(-100%);">13</span>
<span class="t f-mono" style="top:54px;font-size:24px;line-height:28px;color:#5f826b;letter-spacing:-0.049px;left:148.40px;">*/</span>
<span class="t f-mono" style="top:86px;font-size:22px;line-height:25px;color:#4b5059;letter-spacing:-0.045px;left:53.95px;transform:translateX(-100%);">14</span>
<span class="t f-mono" style="top:84px;font-size:24px;line-height:28px;color:#cf8e6d;letter-spacing:-0.049px;left:134.00px;">public class</span>
<span class="t f-mono" style="top:84px;font-size:24px;line-height:28px;color:#bcbec4;letter-spacing:-0.049px;left:321.20px;">Test02 {</span>
<span class="t f-mono" style="top:116px;font-size:22px;line-height:25px;color:#4b5059;letter-spacing:-0.045px;left:53.95px;transform:translateX(-100%);">15</span>
<span class="t f-mono" style="top:146px;font-size:22px;line-height:25px;color:#4b5059;letter-spacing:-0.045px;left:53.95px;transform:translateX(-100%);">16</span>
<span class="t f-mono" style="top:144px;font-size:24px;line-height:28px;color:#cf8e6d;letter-spacing:-0.049px;left:191.60px;">public static void</span>
<span class="t f-mono" style="top:144px;font-size:24px;line-height:28px;color:#56a8f5;letter-spacing:-0.049px;left:465.20px;">main</span>
<span class="t f-mono" style="top:144px;font-size:24px;line-height:28px;color:#bcbec4;letter-spacing:-0.049px;left:522.80px;">(String[] args) {</span>
<span class="t f-mono" style="top:176px;font-size:22px;line-height:25px;color:#4b5059;letter-spacing:-0.045px;left:53.95px;transform:translateX(-100%);">17</span>
<span class="t f-mono" style="top:174px;font-size:24px;line-height:28px;color:#bcbec4;letter-spacing:-0.049px;left:249.20px;">Son1 son1 = </span>
<span class="t f-mono" style="top:174px;font-size:24px;line-height:28px;color:#cf8e6d;letter-spacing:-0.049px;left:422.00px;">new</span>
<span class="t f-mono" style="top:174px;font-size:24px;line-height:28px;color:#bcbec4;letter-spacing:-0.049px;left:479.60px;">Son1();</span>
<span class="t f-mono" style="top:206px;font-size:22px;line-height:25px;color:#4b5059;letter-spacing:-0.045px;left:53.95px;transform:translateX(-100%);">18</span>
<span class="t f-mono" style="top:204px;font-size:24px;line-height:28px;color:#bcbec4;letter-spacing:-0.049px;left:249.20px;">son1.f();</span>
<span class="t f-mono" style="top:236px;font-size:22px;line-height:25px;color:#4b5059;letter-spacing:-0.045px;left:53.95px;transform:translateX(-100%);">19</span>
<span class="t f-mono" style="top:234px;font-size:24px;line-height:28px;color:#bcbec4;letter-spacing:-0.049px;left:249.20px;">son1.clone();</span>
<span class="t f-mono" style="top:266px;font-size:22px;line-height:25px;color:#4b5059;letter-spacing:-0.045px;left:53.95px;transform:translateX(-100%);">20</span>
<span class="t f-mono" style="top:296px;font-size:22px;line-height:25px;color:#4b5059;letter-spacing:-0.045px;left:53.95px;transform:translateX(-100%);">21</span>
<span class="t f-mono" style="top:294px;font-size:24px;line-height:28px;color:#bcbec4;letter-spacing:-0.049px;left:249.20px;">Son2 son2 = </span>
<span class="t f-mono" style="top:294px;font-size:24px;line-height:28px;color:#cf8e6d;letter-spacing:-0.049px;left:422.00px;">new</span>
<span class="t f-mono" style="top:294px;font-size:24px;line-height:28px;color:#bcbec4;letter-spacing:-0.049px;left:479.60px;">Son2();</span>
<span class="t f-mono" style="top:326px;font-size:22px;line-height:25px;color:#4b5059;letter-spacing:-0.045px;left:53.95px;transform:translateX(-100%);">22</span>
<span class="t f-mono" style="top:324px;font-size:24px;line-height:28px;color:#bcbec4;letter-spacing:-0.049px;left:249.20px;">son2.f();</span>
<span class="t f-mono" style="top:356px;font-size:22px;line-height:25px;color:#a1a3ab;letter-spacing:-0.045px;left:53.95px;transform:translateX(-100%);">23</span>
<span class="t f-mono" style="top:354px;font-size:24px;line-height:28px;color:#bcbec4;letter-spacing:-0.049px;left:249.20px;">son2.clone();</span>
<span class="t f-mono" style="top:386px;font-size:22px;line-height:25px;color:#4b5059;letter-spacing:-0.045px;left:53.95px;transform:translateX(-100%);">24</span>
<span class="t f-mono" style="top:384px;font-size:24px;line-height:28px;color:#bcbec4;letter-spacing:-0.049px;left:191.60px;">}</span>
<span class="t f-mono" style="top:416px;font-size:22px;line-height:25px;color:#4b5059;letter-spacing:-0.045px;left:53.95px;transform:translateX(-100%);">25</span>
<span class="t f-mono" style="top:446px;font-size:22px;line-height:25px;color:#4b5059;letter-spacing:-0.045px;left:53.95px;transform:translateX(-100%);">26</span>
<span class="t f-mono" style="top:444px;font-size:24px;line-height:28px;color:#bcbec4;letter-spacing:-0.049px;left:134.00px;">}</span>
<span class="t f-mono" style="top:476px;font-size:22px;line-height:25px;color:#4b5059;letter-spacing:-0.045px;left:53.95px;transform:translateX(-100%);">27</span>
<svg style="left:318.2px;top:225.5px;" width="20.4" height="8" viewBox="0 0 20.4 8" fill="none"><path d="M2.0 6.0 L5.6 2.0 L9.2 6.0 L12.8 2.0 L16.4 6.0 L20.0 2.0" stroke="#e5505f" stroke-width="1.5" stroke-linejoin="miter"/></svg>
<svg style="left:318.2px;top:255.5px;" width="78.0" height="8" viewBox="0 0 78.0 8" fill="none"><path d="M2.0 6.0 L5.6 2.0 L9.2 6.0 L12.8 2.0 L16.4 6.0 L20.0 2.0 L23.6 6.0 L27.2 2.0 L30.8 6.0 L34.4 2.0 L38.0 6.0 L41.6 2.0 L45.2 6.0 L48.8 2.0 L52.4 6.0 L56.0 2.0 L59.6 6.0 L63.2 2.0 L66.8 6.0 L70.4 2.0 L74.0 6.0 L77.6 2.0" stroke="#e5505f" stroke-width="1.5" stroke-linejoin="miter"/></svg>
<svg style="left:318.2px;top:345.5px;" width="20.4" height="8" viewBox="0 0 20.4 8" fill="none"><path d="M2.0 6.0 L5.6 2.0 L9.2 6.0 L12.8 2.0 L16.4 6.0 L20.0 2.0" stroke="#e5505f" stroke-width="1.5" stroke-linejoin="miter"/></svg>
<svg style="left:318.2px;top:375.5px;" width="78.0" height="8" viewBox="0 0 78.0 8" fill="none"><path d="M2.0 6.0 L5.6 2.0 L9.2 6.0 L12.8 2.0 L16.4 6.0 L20.0 2.0 L23.6 6.0 L27.2 2.0 L30.8 6.0 L34.4 2.0 L38.0 6.0 L41.6 2.0 L45.2 6.0 L48.8 2.0 L52.4 6.0 L56.0 2.0 L59.6 6.0 L63.2 2.0 L66.8 6.0 L70.4 2.0 L74.0 6.0 L77.6 2.0" stroke="#e5505f" stroke-width="1.5" stroke-linejoin="miter"/></svg>
<svg style="left:64.5px;top:82.7px;" width="26" height="26" viewBox="0 0 26 26" fill="none"><path d="M3.500 5.500 Q3.500 3 5.700 4.200 L20 11.900 Q22 13 20 14.100 L5.700 21.800 Q3.500 23 3.500 20.500 Z" fill="#253627" stroke="#57965c" stroke-width="1.900" stroke-linejoin="round"/></svg>
<svg style="left:64.5px;top:142.7px;" width="26" height="26" viewBox="0 0 26 26" fill="none"><path d="M3.500 5.500 Q3.500 3 5.700 4.200 L20 11.900 Q22 13 20 14.100 L5.700 21.800 Q3.500 23 3.500 20.500 Z" fill="#253627" stroke="#57965c" stroke-width="1.900" stroke-linejoin="round"/></svg>
<div style="left:848px;top:239px;width:13px;height:349px;background:#3e4044;border-radius:6.5px;"></div>
<div style="left:840px;top:156px;width:28px;height:4px;background:#c5a04a;"></div>
<div style="left:840px;top:192px;width:28px;height:4px;background:#c5a04a;"></div>
<div style="left:840px;top:350px;width:28px;height:4px;background:#db5060;"></div>
<div style="left:840px;top:368px;width:28px;height:4px;background:#db5060;"></div>
<div style="left:840px;top:420px;width:28px;height:4px;background:#db5060;"></div>
<div style="left:840px;top:437.5px;width:28px;height:4px;background:#db5060;"></div>
<div style="left:652px;top:6px;width:195px;height:42px;background:#1e1f22;border-radius:10px 0 0 10px;"></div>
<svg style="left:668px;top:13px;" width="26" height="26" viewBox="0 0 26 26" fill="none"><circle cx="13" cy="13" r="12" fill="#db5060"/><path d="M13 6.500 V13.500" stroke="#1e1f22" stroke-width="2.800" stroke-linecap="round"/><circle cx="13" cy="18.300" r="1.800" fill="#1e1f22"/></svg>
<span class="t f-sans" style="top:12px;font-size:24px;line-height:27px;color:#bcbec4;left:699.00px;">4</span>
<svg style="left:727px;top:14px;" width="28" height="24" viewBox="0 0 28 24" fill="none"><path d="M14 2.200 C14.900 2.200 15.700 2.700 16.100 3.500 L26 20 C26.900 21.600 25.800 22.500 24.200 22.500 H3.800 C2.200 22.500 1.100 21.600 2 20 L11.900 3.500 C12.300 2.700 13.100 2.200 14 2.200 Z" fill="#c5a04a"/><path d="M14 8 V14.500" stroke="#1e1f22" stroke-width="2.600" stroke-linecap="round"/><circle cx="14" cy="18.700" r="1.700" fill="#1e1f22"/></svg>
<span class="t f-sans" style="top:12px;font-size:24px;line-height:27px;color:#bcbec4;left:759.00px;">2</span>
<svg style="left:793.5px;top:20.75px;" width="19" height="11.5" viewBox="0 0 19 11.5" fill="none"><path d="M2 9.5 L9.5 2 L17 9.5" stroke="#b4b8bf" stroke-width="1.9" stroke-linecap="round" stroke-linejoin="round"/></svg>
<svg style="left:835.5px;top:20.75px;" width="19" height="11.5" viewBox="0 0 19 11.5" fill="none"><path d="M2 2 L9.5 9.5 L17 2" stroke="#b4b8bf" stroke-width="1.9" stroke-linecap="round" stroke-linejoin="round"/></svg>
</div>
<div style="left:3280px;top:82px;width:80px;height:1398px;background:#2b2d30;"></div>
<svg style="left:3300px;top:100px;" width="40" height="44" viewBox="0 0 40 44" fill="none"><g stroke="#ced0d6" stroke-width="2.8" stroke-linecap="round" stroke-linejoin="round"><path d="M20 5 C13.500 5 9.500 9.500 9.500 16 V22.500 L5 31 C4.500 32 5 33 6.200 33 H33.800 C35 33 35.500 32 35 31 L30.500 22.500 V16 C30.500 9.500 26.500 5 20 5 Z"/></g><path d="M15.500 36 H24.500 C23.800 38.500 22 39.800 20 39.800 C18 39.800 16.200 38.500 15.500 36 Z" fill="#ced0d6"/></svg>
<svg style="left:3300px;top:182px;" width="40" height="40" viewBox="0 0 40 40" fill="none"><g stroke="#ced0d6" stroke-width="2.8" stroke-linecap="round" stroke-linejoin="round"><ellipse cx="20" cy="9.500" rx="14.500" ry="5.500"/><path d="M5.500 9.500 V30.500 C5.500 33.500 12 36 20 36 C28 36 34.500 33.500 34.500 30.500 V9.500"/><path d="M5.500 16.500 C5.500 19.500 12 22 20 22 C28 22 34.500 19.500 34.500 16.500"/><path d="M5.500 23.500 C5.500 26.500 12 29 20 29 C28 29 34.500 26.500 34.500 23.500"/></g></svg>
<svg style="left:3299px;top:266px;" width="42" height="33" viewBox="0 0 42 33" fill="none"><g stroke="#ced0d6" stroke-width="4" stroke-linecap="round" stroke-linejoin="round"><path d="M5 27 L10 6"/><path d="M8.500 12.500 C11 7.500 14.500 5.500 18 5.500 C21.500 5.500 22.700 8 22 11.500 L18.300 27"/><path d="M21 12.500 C23.500 7.500 27 5.500 30.500 5.500 C34 5.500 35.400 8 34.600 11.500 L31 27"/></g></svg>
<div class="clip" style="left:3306px;top:343px;width:28px;height:38px;overflow:hidden;background:linear-gradient(135deg,#dff2fb 0%,#dff2fb 50%,#a9d9f1 50%,#a9d9f1 100%);"><span class="t f-mono" style="left:1.500px;top:1.0px;font-size:7px;line-height:7px;letter-spacing:-0.100px;color:#27485a;font-weight:bold;">100110</span><span class="t f-mono" style="left:1.500px;top:8.3px;font-size:7px;line-height:7px;letter-spacing:-0.100px;color:#27485a;font-weight:bold;">011001</span><span class="t f-mono" style="left:1.500px;top:15.6px;font-size:7px;line-height:7px;letter-spacing:-0.100px;color:#27485a;font-weight:bold;">110100</span><span class="t f-mono" style="left:1.500px;top:22.9px;font-size:7px;line-height:7px;letter-spacing:-0.100px;color:#27485a;font-weight:bold;">010011</span><span class="t f-mono" style="left:1.500px;top:30.2px;font-size:7px;line-height:7px;letter-spacing:-0.100px;color:#27485a;font-weight:bold;">110100</span></div>
<svg style="left:3300px;top:422px;" width="40" height="40" viewBox="0 0 40 40" fill="none"><circle cx="20" cy="20" r="16.500" stroke="#ced0d6" stroke-width="2.8" stroke-linecap="round" stroke-linejoin="round"/><circle cx="14" cy="14.5" r="2.800" fill="#ced0d6"/><circle cx="14" cy="25.5" r="2.800" fill="#ced0d6"/><circle cx="26" cy="14.5" r="2.800" fill="#ced0d6"/><circle cx="26" cy="25.5" r="2.800" fill="#ced0d6"/></svg>
<div style="left:3296px;top:492px;width:48px;height:2px;background:#43454a;"></div>
<svg style="left:3300px;top:524px;" width="40" height="42" viewBox="0 0 40 42" fill="none"><g stroke="#ced0d6" stroke-width="2.8" stroke-linecap="round" stroke-linejoin="round"><path d="M5.500 8 C5.500 5.500 7 4 9.500 4 H34"/><path d="M34 10 H9 C7 10 5.500 9 5.500 7 V35 C5.500 37 7 38.500 9 38.500 H31 C33 38.500 34.500 37 34.500 35 V10"/></g><path d="M14.500 31 L20 17.500 L25.500 31 M16.500 26.500 H23.500" stroke="#ced0d6" stroke-width="2.300" stroke-linecap="round" stroke-linejoin="round"/></svg>
<svg style="left:3300px;top:604px;" width="42" height="42" viewBox="0 0 42 42" fill="none"><g stroke="#ced0d6" stroke-width="2.8" stroke-linecap="round" stroke-linejoin="round"><path d="M5.500 33 V9 C5.500 6.500 7 5 9.500 5 H19 C21.500 5 23 6.500 23 9 V13"/><path d="M5.500 33 C5.500 35.500 7 37 9.500 37 H13"/><rect x="15.500" y="20" width="20" height="11" rx="1.500"/><path d="M12.500 36.500 H38"/><path d="M11 10.500 H14"/></g></svg>
<svg style="left:3295px;top:1410.5px;" width="52" height="52" viewBox="0 0 52 52" fill="none"><g transform="translate(26 26) rotate(45)"><path d="M-8 1 L-15.500 11 L-15.500 16 L-8 11.500 Z" fill="#8f8f8f"/><path d="M8 1 L15.500 11 L15.500 16 L8 11.500 Z" fill="#8f8f8f"/><path d="M-4.500 10 H4.500 L3.200 15.500 H-3.200 Z" fill="#858585"/><path d="M0 -22 C5 -17 8 -9.500 8 -2 V11.500 H-8 V-2 C-8 -9.500 -5 -17 0 -22 Z" fill="#a9a9a9"/><path d="M0 -22 C3.300 -18.600 5.600 -14.500 6.900 -10.500 H-6.900 C-5.600 -14.500 -3.300 -18.600 0 -22 Z" fill="#858585"/><circle cx="0" cy="-4" r="4.300" fill="#858585"/><circle cx="0" cy="-4" r="2.700" fill="#f4f4f4"/></g></svg>
<span class="t f-sans" style="top:1442px;font-size:20px;line-height:22px;color:#ffffff;letter-spacing:-2.289px;font-weight:bold;left:3319.00px;text-shadow:0 0 2px #2b2d30,0 0 2px #2b2d30,0 0 3px #2b2d30;">JR</span>
<svg style="left:27.5px;top:1501.5px;" width="18" height="18" viewBox="0 0 18 18" fill="none"><rect x="2" y="2" width="14" height="14" rx="3" fill="#25324d" stroke="#548af7" stroke-width="2"/></svg>
<span class="t f-sans" style="top:1494px;font-size:27px;line-height:30px;color:#a9acb3;letter-spacing:0.906px;left:52.00px;">idea-test-project</span>
<svg style="left:279.5px;top:1499.5px;" width="11" height="18" viewBox="0 0 11 18" fill="none"><path d="M2 2 L9 9.0 L2 16" stroke="#a0a3ab" stroke-width="2.1" stroke-linecap="round" stroke-linejoin="round"/></svg>
<svg style="left:309px;top:1501.5px;" width="18" height="18" viewBox="0 0 18 18" fill="none"><rect x="2" y="2" width="14" height="14" rx="3" fill="#25324d" stroke="#548af7" stroke-width="2"/></svg>
<span class="t f-sans" style="top:1494px;font-size:27px;line-height:30px;color:#a9acb3;letter-spacing:-0.004px;left:334.00px;">_0_base-learning</span>
<svg style="left:561.5px;top:1499.5px;" width="11" height="18" viewBox="0 0 11 18" fill="none"><path d="M2 2 L9 9.0 L2 16" stroke="#a0a3ab" stroke-width="2.1" stroke-linecap="round" stroke-linejoin="round"/></svg>
<span class="t f-sans" style="top:1494px;font-size:27px;line-height:30px;color:#a9acb3;letter-spacing:0.333px;left:592.00px;">src</span>
<svg style="left:648.0px;top:1499.5px;" width="11" height="18" viewBox="0 0 11 18" fill="none"><path d="M2 2 L9 9.0 L2 16" stroke="#a0a3ab" stroke-width="2.1" stroke-linecap="round" stroke-linejoin="round"/></svg>
<span class="t f-sans" style="top:1494px;font-size:27px;line-height:30px;color:#a9acb3;letter-spacing:-0.208px;left:678.00px;">main</span>
<svg style="left:755.5px;top:1499.5px;" width="11" height="18" viewBox="0 0 11 18" fill="none"><path d="M2 2 L9 9.0 L2 16" stroke="#a0a3ab" stroke-width="2.1" stroke-linecap="round" stroke-linejoin="round"/></svg>
<span class="t f-sans" style="top:1494px;font-size:27px;line-height:30px;color:#a9acb3;letter-spacing:-0.008px;left:786.00px;">java</span>
<svg style="left:854.1px;top:1499.5px;" width="11" height="18" viewBox="0 0 11 18" fill="none"><path d="M2 2 L9 9.0 L2 16" stroke="#a0a3ab" stroke-width="2.1" stroke-linecap="round" stroke-linejoin="round"/></svg>
<span class="t f-sans" style="top:1494px;font-size:27px;line-height:30px;color:#a9acb3;letter-spacing:-0.216px;left:883.00px;">_base</span>
<svg style="left:974.1px;top:1499.5px;" width="11" height="18" viewBox="0 0 11 18" fill="none"><path d="M2 2 L9 9.0 L2 16" stroke="#a0a3ab" stroke-width="2.1" stroke-linecap="round" stroke-linejoin="round"/></svg>
<span class="t f-sans" style="top:1494px;font-size:27px;line-height:30px;color:#a9acb3;letter-spacing:0.496px;left:1004.00px;">modifier</span>
<svg style="left:1124.5px;top:1499.5px;" width="11" height="18" viewBox="0 0 11 18" fill="none"><path d="M2 2 L9 9.0 L2 16" stroke="#a0a3ab" stroke-width="2.1" stroke-linecap="round" stroke-linejoin="round"/></svg>
<span class="t f-sans" style="top:1494px;font-size:27px;line-height:30px;color:#a9acb3;letter-spacing:0.091px;left:1154.00px;">test1</span>
<svg style="left:1231.5px;top:1499.5px;" width="11" height="18" viewBox="0 0 11 18" fill="none"><path d="M2 2 L9 9.0 L2 16" stroke="#a0a3ab" stroke-width="2.1" stroke-linecap="round" stroke-linejoin="round"/></svg>
<span class="t f-sans" style="top:1494px;font-size:27px;line-height:30px;color:#a9acb3;letter-spacing:-1.523px;left:1262.00px;">p1</span>
<svg style="left:1308.0px;top:1499.5px;" width="11" height="18" viewBox="0 0 11 18" fill="none"><path d="M2 2 L9 9.0 L2 16" stroke="#a0a3ab" stroke-width="2.1" stroke-linecap="round" stroke-linejoin="round"/></svg>
<svg style="left:1339px;top:1493.5px;" width="30" height="30" viewBox="0 0 30 30" fill="none"><circle cx="15" cy="15" r="13" fill="#25324d" stroke="#548af7" stroke-width="2"/><path d="M20.3 10.8 A6.300 6.300 0 1 0 20.3 19.2" stroke="#548af7" stroke-width="2.200" stroke-linecap="round" /></svg>
<span class="t f-sans" style="top:1494px;font-size:27px;line-height:30px;color:#a9acb3;letter-spacing:0.456px;left:1378.70px;">Test01</span>
<svg style="left:1480.2px;top:1499.5px;" width="11" height="18" viewBox="0 0 11 18" fill="none"><path d="M2 2 L9 9.0 L2 16" stroke="#a0a3ab" stroke-width="2.1" stroke-linecap="round" stroke-linejoin="round"/></svg>
<svg style="left:1512px;top:1494.5px;" width="28" height="28" viewBox="0 0 28 28" fill="none"><circle cx="14" cy="14" r="12.500" fill="#402a2b" stroke="#db5c5c" stroke-width="2"/></svg>
<span class="t f-sans" style="top:1495px;font-size:21px;line-height:23px;color:#db5c5c;left:1526.00px;transform:translateX(-50%);">m</span>
<span class="t f-sans" style="top:1494px;font-size:27px;line-height:30px;color:#a9acb3;letter-spacing:-0.233px;left:1550.00px;">main</span>
<svg style="left:2746px;top:1493px;" width="32" height="32" viewBox="0 0 32 32" fill="none"><defs><linearGradient id="vg" x1="0" y1="0" x2="1" y2="1"><stop offset="0" stop-color="#6bd968"/><stop offset="0.550" stop-color="#1fb6a8"/><stop offset="1" stop-color="#2f7cf6"/></linearGradient></defs><path d="M2 3 H10.500 L12 19 L21.500 3 H30 L14.500 29 H4 Z" fill="url(#vg)"/></svg>
<span class="t f-sans" style="top:1494px;font-size:27px;line-height:30px;color:#a9acb3;letter-spacing:-0.516px;left:2811.00px;">24:21</span>
<svg style="left:2913px;top:1496px;" width="26" height="26" viewBox="0 0 26 26" fill="none"><path d="M25 13.300 C25 12.400 24.900 11.600 24.800 10.800 H13 V15.700 H19.700 C19.400 17.200 18.500 18.500 17.200 19.400 V22.600 H21.200 C23.600 20.400 25 17.100 25 13.300 Z" fill="#4285f4"/><path d="M13 25.500 C16.400 25.500 19.200 24.400 21.200 22.600 L17.200 19.400 C16.100 20.100 14.700 20.600 13 20.600 C9.700 20.600 7 18.400 6 15.400 H1.900 V18.700 C3.900 22.700 8.100 25.500 13 25.500 Z" fill="#34a853"/><path d="M6 15.400 C5.700 14.600 5.600 13.800 5.600 13 C5.600 12.200 5.700 11.400 6 10.600 V7.300 H1.900 C1 9 0.500 10.900 0.500 13 C0.500 15.100 1 17 1.900 18.700 Z" fill="#fbbc05"/><path d="M13 5.400 C14.900 5.400 16.500 6 17.800 7.200 L21.300 3.700 C19.200 1.700 16.400 0.500 13 0.500 C8.100 0.500 3.900 3.300 1.900 7.300 L6 10.600 C7 7.600 9.700 5.400 13 5.400 Z" fill="#ea4335"/></svg>
<span class="t f-sans" style="top:1494px;font-size:27px;line-height:30px;color:#a9acb3;letter-spacing:-1.958px;left:2975.00px;">LF</span>
<span class="t f-sans" style="top:1494px;font-size:27px;line-height:30px;color:#a9acb3;letter-spacing:0.180px;left:3037.00px;">UTF-8</span>
<span class="t f-sans" style="top:1494px;font-size:27px;line-height:30px;color:#a9acb3;letter-spacing:0.115px;left:3149.00px;">4 spaces</span>
<svg style="left:3294px;top:1494px;" width="36" height="32" viewBox="0 0 36 32" fill="none"><g stroke="#ced0d6" stroke-width="2.200" stroke-linecap="round" stroke-linejoin="round"><rect x="5.100" y="13.600" width="17.800" height="13.300" rx="2.800"/><path d="M14 17.400 V22.600"/><path d="M20.400 13.600 V9.550 A4.050 4.050 0 0 1 28.500 9.550 V13"/></g></svg>
<div id="edge"></div></div></body></html>
